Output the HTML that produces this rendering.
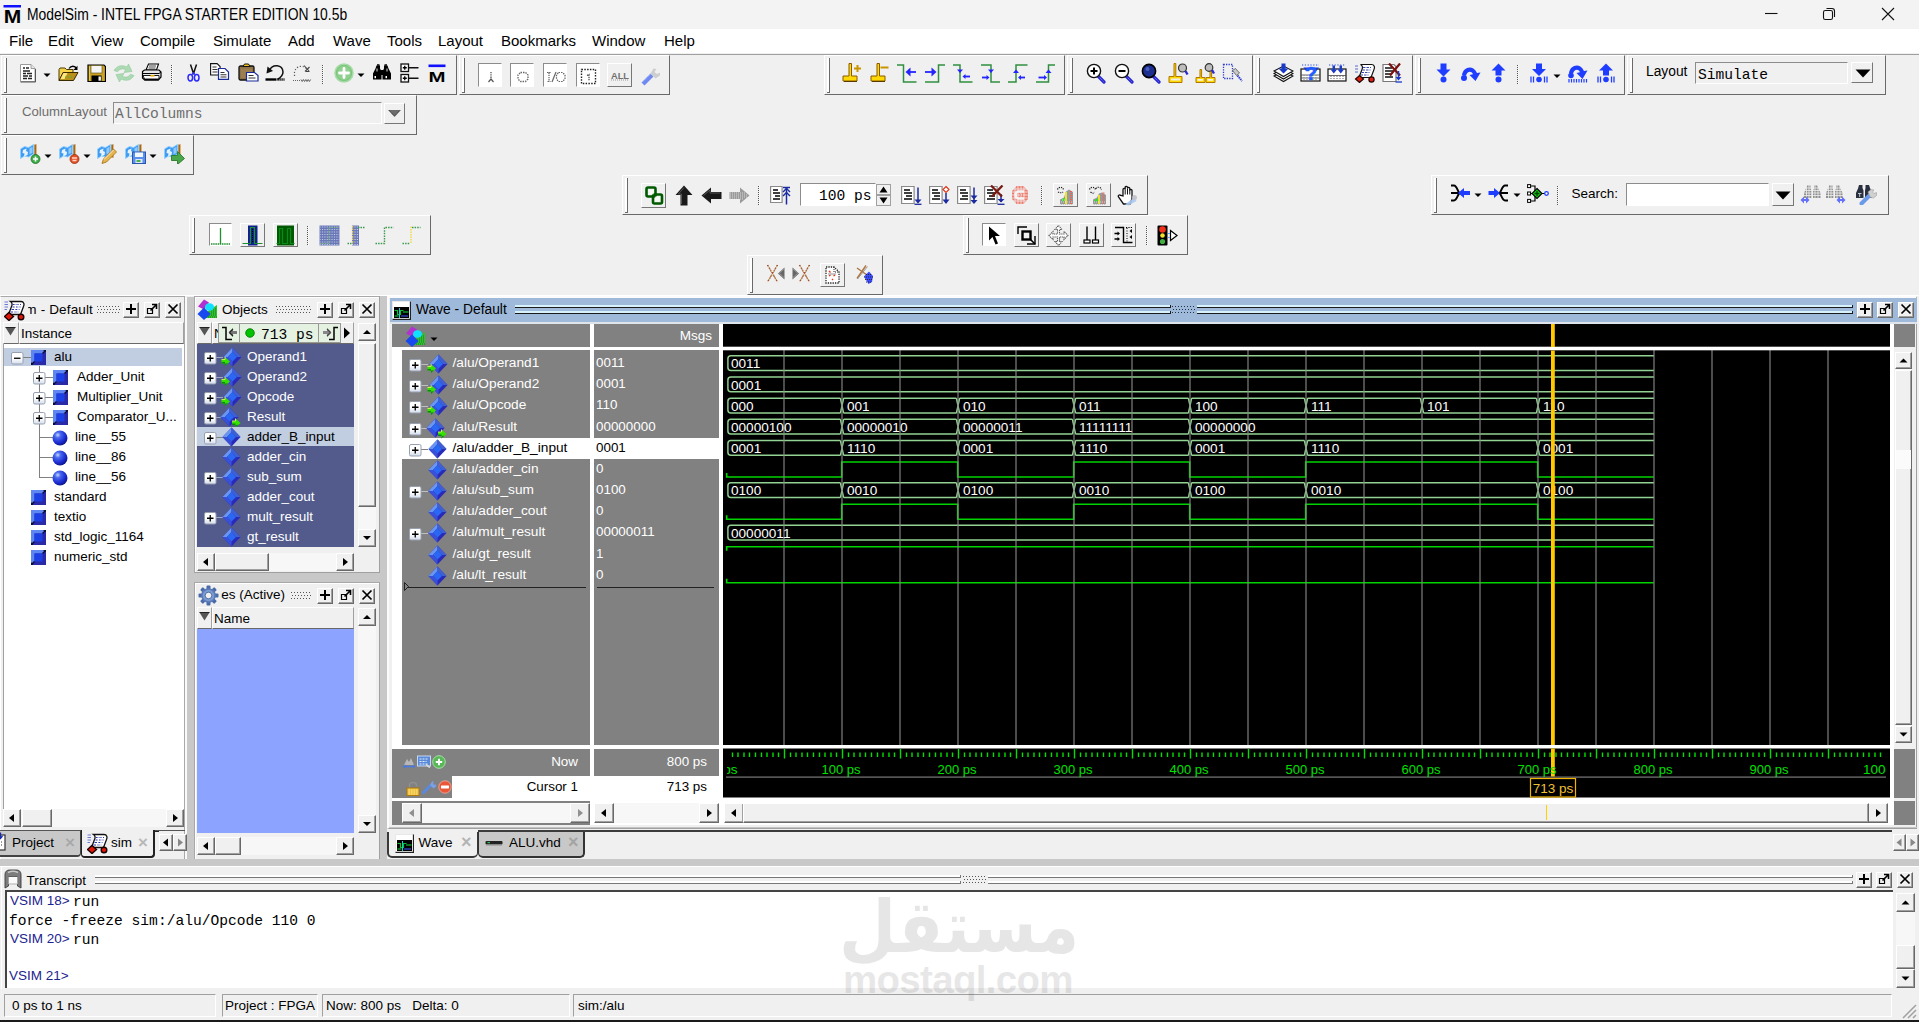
<!DOCTYPE html>
<html><head><meta charset="utf-8"><title>ModelSim - INTEL FPGA STARTER EDITION 10.5b</title>
<style>
html,body{margin:0;padding:0}
body{width:1919px;height:1022px;overflow:hidden;background:#f0f0f0;position:relative;font-family:"Liberation Sans",sans-serif;font-size:13.5px;color:#000}
.a{position:absolute;box-sizing:border-box}
.t{white-space:nowrap;line-height:16px;font-size:13.5px}
.m{white-space:nowrap;font-family:"Liberation Mono",monospace;font-size:14.6px;line-height:17px}
.tb{background:#f0f0f0;border-top:1px solid #fff;border-left:1px solid #fff;border-right:1px solid #696969;border-bottom:1px solid #696969}
.sunk{border-top:1px solid #8c8c8c;border-left:1px solid #8c8c8c;border-right:1px solid #fff;border-bottom:1px solid #fff}
.rbtn{border-top:1px solid #fff;border-left:1px solid #fff;border-right:1px solid #777;border-bottom:1px solid #777;background:#f0f0f0}
.sb{background:#f0f0f0;border-top:1px solid #fff;border-left:1px solid #fff;border-right:1px solid #696969;border-bottom:1px solid #696969;box-shadow:inset -1px -1px 0 #a0a0a0}
.trough{background:#f7f7f7}
.hdr{background:#f0f0f0;border-top:1px solid #fff;border-left:1px solid #fff;border-right:1px solid #a0a0a0;border-bottom:1px solid #696969}

</style></head>
<body>
<div class="a " style="left:0px;top:0px;width:1919px;height:29px;background:#f3f3f3"></div>
<svg class="a" style="left:3px;top:4px" width="19" height="20" viewBox="0 0 19 20"><rect x="0.500" y="1" width="17.500" height="2.500" fill="#1010ff"/><text x="9.500" y="19" font-family="Liberation Sans,sans-serif" font-weight="bold" font-size="17.500" text-anchor="middle" textLength="17.500" lengthAdjust="spacingAndGlyphs" fill="#000">M</text></svg>
<div class="a t" style="left:27px;top:5px;font-size:15.6px;line-height:20px;transform:scaleX(0.891);transform-origin:0 0;">ModelSim - INTEL FPGA STARTER EDITION 10.5b</div>
<svg class="a" style="left:1760px;top:0px" width="150" height="29"><path d="M5 13.5h12.500" stroke="#111" stroke-width="1.100"/><rect x="63.500" y="10.500" width="9" height="9" rx="1.800" fill="none" stroke="#111" stroke-width="1.100"/><path d="M66.500 8.500h5.500a2.500 2.500 0 0 1 2.500 2.500v6" fill="none" stroke="#111" stroke-width="1.100"/><path d="M122 8l12 12M134 8l-12 12" stroke="#111" stroke-width="1.100"/></svg>
<div class="a " style="left:0px;top:29px;width:1919px;height:24px;background:#fff"></div>
<div class="a t" style="left:9px;top:31px;font-size:15px;line-height:20px;">File</div>
<div class="a t" style="left:48px;top:31px;font-size:15px;line-height:20px;">Edit</div>
<div class="a t" style="left:91px;top:31px;font-size:15px;line-height:20px;">View</div>
<div class="a t" style="left:140px;top:31px;font-size:15px;line-height:20px;">Compile</div>
<div class="a t" style="left:213px;top:31px;font-size:15px;line-height:20px;">Simulate</div>
<div class="a t" style="left:288px;top:31px;font-size:15px;line-height:20px;">Add</div>
<div class="a t" style="left:333px;top:31px;font-size:15px;line-height:20px;">Wave</div>
<div class="a t" style="left:387px;top:31px;font-size:15px;line-height:20px;">Tools</div>
<div class="a t" style="left:438px;top:31px;font-size:15px;line-height:20px;">Layout</div>
<div class="a t" style="left:501px;top:31px;font-size:15px;line-height:20px;">Bookmarks</div>
<div class="a t" style="left:592px;top:31px;font-size:15px;line-height:20px;">Window</div>
<div class="a t" style="left:664px;top:31px;font-size:15px;line-height:20px;">Help</div>
<div class="a " style="left:0px;top:53px;width:1919px;height:1px;background:#f0f0f0"></div>
<div class="a " style="left:0px;top:54px;width:1919px;height:1px;background:#a0a0a0"></div>
<div class="a tb" style="left:1px;top:55px;width:456px;height:40px;"></div>
<div class="a" style="left:4px;top:58px;width:3px;height:35px;border-right:1px solid #696969;background:#fff;"></div>
<div class="a" style="left:4px;top:92px;width:3px;height:1px;background:#696969"></div>
<svg class="a" style="left:19px;top:63px" width="18" height="20" viewBox="0 0 18 20"><path d="M1.5 1.5h10.5l4 4v13h-14.5z" fill="#fff" stroke="#9a9a9a"/><path d="M16.5 6v13h-15" fill="none" stroke="#555" stroke-width="1"/><path d="M12 1.5v4h4" fill="#e8e8e8" stroke="#888" stroke-width="0.8"/><path d="M4 5h2M7 5h3M4 8h7M4 10.5h3M8 10.5h5M4 13h5M10 13h3M4 15.5h4M9 15.5h4" stroke="#222" stroke-width="1.4"/></svg>
<svg class="a" style="left:43px;top:73px" width="8" height="5"><path d="M0.5 0.5h7l-3.5 3.5z" fill="#000"/></svg>
<svg class="a" style="left:58px;top:65px" width="21" height="17" viewBox="0 0 21 17"><path d="M1 15.5V4.5l1-1.5h5l1.5 1.5h6.5v3" fill="#f6d24a" stroke="#4a3a00" stroke-width="1"/><path d="M1 15.5l4-8h15l-4.5 8z" fill="#b8901c" stroke="#3a2a00" stroke-width="1"/><path d="M2.5 14l3-6h4l-3 6z" fill="#ffe680"/><path d="M7 12h1M10 12h1M13 12h1" stroke="#1fbf3f" stroke-width="1.2"/><path d="M11 3.5c2-3 6-3 7.5 0" fill="none" stroke="#000" stroke-width="1.3"/><path d="M19.5 0.8v4.2h-4.2z" fill="#000"/></svg>
<svg class="a" style="left:87px;top:64px" width="19" height="18" viewBox="0 0 19 18"><path d="M1 1h16l1.5 1.5v15h-17.5z" fill="#c9a227" stroke="#000" stroke-width="1.2"/><rect x="4" y="1.6" width="11" height="7.4" fill="#f4f4f4" stroke="#5a4a10" stroke-width="0.6"/><rect x="4.5" y="11.5" width="10" height="6" fill="#000"/><rect x="11.5" y="12.5" width="2.4" height="4.2" fill="#f4f4f4"/><path d="M2.5 2v14.5" stroke="#e8c84a" stroke-width="1"/></svg>
<svg class="a" style="left:113px;top:63px" width="22" height="20" viewBox="0 0 22 20"><g fill="#a9d9b0" stroke="#8cc796" stroke-width="0.6" opacity="0.95"><path d="M1 7.5c3-5 8-6 13-3.5l1.5-3 3.5 7.5-8 1 1.7-2.8c-3-1.5-6-1-8.2 2z"/><path d="M21 12.5c-3 5-8 6-13 3.5l-1.5 3-3.5-7.5 8-1-1.7 2.800c3 1.5 6 1 8.200-2z"/></g></svg>
<svg class="a" style="left:141px;top:63px" width="21" height="18" viewBox="0 0 21 18"><path d="M5 7l2.5-6h10l-2 6z" fill="#fff" stroke="#000" stroke-width="1.1"/><path d="M8 3h7M7.500 5h7" stroke="#444" stroke-width="1"/><path d="M1.500 8.500l2-1.500h14.500l2 2v5l-2.500 3h-14l-2-2z" fill="#e6e6e6" stroke="#000" stroke-width="1.2"/><path d="M1.500 10.500h16.500l2-1.500" fill="none" stroke="#000" stroke-width="1"/><path d="M2 12.500h16v3.500h-14.500z" fill="#fff" stroke="#000" stroke-width="0.9"/><rect x="9.500" y="12" width="4" height="1.600" fill="#f0b000"/><path d="M3.500 16.800h14" stroke="#000" stroke-width="1.400"/></svg>
<div class="a" style="left:171px;top:65px;width:0;height:19px;border-left:1px dotted #555;border-right:1px dotted #fff"></div>
<svg class="a" style="left:187px;top:64px" width="13" height="18" viewBox="0 0 13 18"><path d="M3.500 0.500l3 9M9.500 0.500l-3 9" stroke="#111" stroke-width="1.500" fill="none"/><path d="M6.500 8.500v2" stroke="#111" stroke-width="1.5"/><ellipse cx="3.300" cy="13.800" rx="2.300" ry="3.200" fill="none" stroke="#2a2aff" stroke-width="1.500"/><ellipse cx="9.700" cy="13.800" rx="2.300" ry="3.200" fill="none" stroke="#2a2aff" stroke-width="1.500"/><path d="M5 10.500l1.500-1.500 1.500 1.500" stroke="#2a2aff" stroke-width="1.300" fill="none"/></svg>
<svg class="a" style="left:210px;top:63px" width="20" height="17" viewBox="0 0 20 17"><path d="M0.600 0.600h6.500l3 3v8.400h-9.500z" fill="#fff" stroke="#111" stroke-width="1.100"/><path d="M2.500 4h4M2.500 6.500h5M2.500 9h5" stroke="#333" stroke-width="1.100"/><path d="M8.500 5.500h6.500l3.500 3.500v7.400h-10z" fill="#fff" stroke="#1a2a9a" stroke-width="1.200"/><path d="M10.500 9.500h4M10.500 11.800h6M10.500 14h6" stroke="#333" stroke-width="1.100"/></svg>
<svg class="a" style="left:238px;top:63px" width="21" height="19" viewBox="0 0 21 19"><rect x="1" y="3" width="15" height="14" rx="1.500" fill="#8f7248" stroke="#111" stroke-width="1.300"/><path d="M5 3.500l1.500-2.500h4l1.500 2.500z" fill="#f2c21a" stroke="#111" stroke-width="1"/><rect x="3" y="5.500" width="11" height="9.500" fill="#a08458" opacity="0.700"/><path d="M8.500 9.500h8l3.500 3v5.500h-11.500z" fill="#fff" stroke="#1a2a9a" stroke-width="1.200"/><path d="M10.500 12.500h5M10.500 15h7" stroke="#333" stroke-width="1.200"/></svg>
<svg class="a" style="left:265px;top:64px" width="20" height="18" viewBox="0 0 20 18"><path d="M4.500 6c3-6 13-6 13.500 2 0 4-3 6-5.500 7.500" fill="none" stroke="#111" stroke-width="1.500"/><path d="M1.500 9.500l1-7 5.500 4.500z" fill="#111"/><path d="M0.500 15.500h11" stroke="#000" stroke-width="2.400"/><path d="M12.500 15.500h7" stroke="#000" stroke-width="2.400" stroke-dasharray="1.200 0.800"/></svg>
<svg class="a" style="left:292px;top:64px" width="20" height="18" viewBox="0 0 20 18"><path d="M2.500 12v-4c1-5 7-8 12-3.500" fill="none" stroke="#555" stroke-width="1.200" stroke-dasharray="1.200 1.800"/><path d="M12 1.500l5 5.500M17.500 3l-4.500 4.500M14 7.500h3.500" fill="none" stroke="#444" stroke-width="1.100"/><path d="M1 16.500h8" stroke="#666" stroke-width="1" stroke-dasharray="1 1"/><path d="M9 15.500l1.200 2 1.200-2 1.200 2 1.200-2 1.200 2 1.200-2 1.200 2 1.200-2" stroke="#555" stroke-width="0.900" fill="none"/></svg>
<div class="a" style="left:322px;top:65px;width:0;height:19px;border-left:1px dotted #555;border-right:1px dotted #fff"></div>
<svg class="a" style="left:334px;top:63px" width="20" height="20" viewBox="0 0 20 20"><circle cx="10" cy="10" r="9" fill="#7cc47c" stroke="#a7dba7" stroke-width="1.500"/><circle cx="10" cy="10" r="7.200" fill="#8fd08f"/><path d="M10 5.500v9M5.500 10h9" stroke="#fff" stroke-width="2.800" stroke-linecap="round"/></svg>
<svg class="a" style="left:357px;top:73px" width="8" height="5"><path d="M0.5 0.5h7l-3.5 3.5z" fill="#000"/></svg>
<svg class="a" style="left:372px;top:64px" width="20" height="17" viewBox="0 0 20 17"><path d="M4.500 1.500h3.500v3l1.500 3v8h-8.500v-6l2.500-5z" fill="#000"/><path d="M12 1.500h3.500l1 3 2.500 5v6h-8.500v-8l1.500-3z" fill="#000"/><rect x="8.500" y="6" width="3" height="5" fill="#000"/><path d="M5 4.500v3M15 4.500v3" stroke="#fff" stroke-width="0.900"/><rect x="2.500" y="12" width="1.500" height="2.200" fill="#fff"/><rect x="13.500" y="12" width="1.500" height="2.200" fill="#fff"/><path d="M5 1h2.500M12.500 1h2.500" stroke="#000" stroke-width="1.400"/></svg>
<svg class="a" style="left:400px;top:63px" width="19" height="20" viewBox="0 0 19 20"><rect x="1" y="1" width="7.500" height="7.500" fill="#fff" stroke="#111" stroke-width="1.300"/><rect x="1" y="11.500" width="7.500" height="7.500" fill="#fff" stroke="#111" stroke-width="1.300"/><path d="M4.750 2.800v4M2.800 4.750h4M4.750 13.300v4M2.800 15.250h4" stroke="#000" stroke-width="1.300"/><path d="M8.500 4.750h10M8.500 15.250h10" stroke="#111" stroke-width="1.300"/></svg>
<svg class="a" style="left:428px;top:64px" width="18" height="18" viewBox="0 0 18 18"><rect x="0.5" y="0.5" width="17" height="2.6" fill="#1010ff"/><text x="9" y="17.5" font-family="Liberation Sans,sans-serif" font-weight="bold" font-size="15" text-anchor="middle" textLength="17" lengthAdjust="spacingAndGlyphs" fill="#000">M</text></svg>
<div class="a tb" style="left:459px;top:55px;width:211px;height:40px;"></div>
<div class="a" style="left:462px;top:58px;width:3px;height:35px;border-right:1px solid #696969;background:#fff;"></div>
<div class="a" style="left:462px;top:92px;width:3px;height:1px;background:#696969"></div>
<div class="a sunk" style="left:478px;top:63px;width:24px;height:24px;background:#fff;"></div>
<svg class="a" style="left:483px;top:69px" width="16" height="16" viewBox="0 0 16 16"><path d="M8 3v7" stroke="#555" stroke-width="1.3" stroke-dasharray="1.3 1"/><path d="M5.500 13l2.500-3 2.500 3" fill="none" stroke="#555" stroke-width="1.200"/></svg>
<div class="a sunk" style="left:510px;top:63px;width:24px;height:24px;background:#fff;"></div>
<svg class="a" style="left:515px;top:69px" width="16" height="16" viewBox="0 0 16 16"><path d="M5.500 3.500h5l2.500 2.500v4l-2.500 2.500h-5l-2.500-2.500v-4z" fill="none" stroke="#666" stroke-width="1.300" stroke-dasharray="1.500 1"/></svg>
<div class="a sunk" style="left:543px;top:63px;width:24px;height:24px;background:#fff;"></div>
<svg class="a" style="left:546px;top:69px" width="20" height="16" viewBox="0 0 20 16"><path d="M1 3.500h4M3 3.500v9M1.500 12.500h3" stroke="#666" stroke-width="1.200" stroke-dasharray="1.400 0.800" fill="none"/><path d="M10 3l-4 10" stroke="#666" stroke-width="1.200"/><path d="M12.500 3.500h4l2.500 2.500v4l-2.500 2.500h-4l-2-2.500v-4z" fill="none" stroke="#666" stroke-width="1.200" stroke-dasharray="1.500 1"/></svg>
<div class="a sunk" style="left:576px;top:63px;width:24px;height:24px;background:#fff;"></div>
<svg class="a" style="left:580px;top:68px" width="18" height="18" viewBox="0 0 18 18"><rect x="1.500" y="1.500" width="14" height="14" fill="none" stroke="#222" stroke-width="1.400" stroke-dasharray="1.500 1.300"/><path d="M7 7.500l2-1v6.500" fill="none" stroke="#444" stroke-width="1.200" stroke-dasharray="1.400 0.800"/></svg>
<div class="a rbtn" style="left:607px;top:63px;width:25px;height:24px;"></div>
<svg class="a" style="left:610px;top:69px" width="20" height="12" viewBox="0 0 20 12"><text x="10" y="10" font-size="9.500" text-anchor="middle" textLength="18" lengthAdjust="spacingAndGlyphs" font-family="Liberation Sans,sans-serif" font-weight="bold" fill="#707070">ALL</text><path d="M1 11h18" stroke="#999" stroke-width="1" stroke-dasharray="1 1"/></svg>
<svg class="a" style="left:640px;top:65px" width="21" height="21" viewBox="0 0 21 21"><g opacity="0.850"><path d="M1.500 17.500l9-9 3 3-9 9z" fill="#5a78f0"/><path d="M10.500 8.500l3-5 3 0.500-2 3 2.500 2 3-1.500 0 3-4.500 3z" fill="#c9c9c9"/><path d="M3 16.500l8-8" stroke="#bcd0ff" stroke-width="1" stroke-dasharray="1 1"/></g></svg>
<div class="a tb" style="left:824px;top:55px;width:241px;height:40px;"></div>
<div class="a" style="left:827px;top:58px;width:3px;height:35px;border-right:1px solid #696969;background:#fff;"></div>
<div class="a" style="left:827px;top:92px;width:3px;height:1px;background:#696969"></div>
<svg class="a" style="left:842px;top:63px" width="20" height="20" viewBox="0 0 20 20"><path d="M7 0.500h2.500v12.500h5.500v5h-14v-5h6z" fill="#ffd900" stroke="#8a5a00" stroke-width="1"/><path d="M2 18.500h13" stroke="#5a3a00" stroke-width="1"/><path d="M15.500 2v7M12 5.500h7" stroke="#c89600" stroke-width="2"/></svg>
<svg class="a" style="left:870px;top:63px" width="20" height="20" viewBox="0 0 20 20"><path d="M7 0.500h2.500v12.500h5.500v5h-14v-5h6z" fill="#ffd900" stroke="#8a5a00" stroke-width="1"/><path d="M2 18.500h13" stroke="#5a3a00" stroke-width="1"/><path d="M10.500 4.500h8" stroke="#c89600" stroke-width="2"/></svg>
<svg class="a" style="left:896px;top:64px" width="22" height="19" viewBox="0 0 22 19"><path d="M1 1h6.500v17h13" fill="none" stroke="#2f8f3f" stroke-width="1.500"/><path d="M14.0 8H20" stroke="#2424ff" stroke-width="1.800"/><path d="M9.5 8l5.0 -4.5v9.0z" fill="#2424ff"/></svg>
<svg class="a" style="left:924px;top:64px" width="22" height="19" viewBox="0 0 22 19"><path d="M1 18h13.500v-17h6.500" fill="none" stroke="#2f8f3f" stroke-width="1.500"/><path d="M1 8H8.0" stroke="#2424ff" stroke-width="1.800"/><path d="M12.5 8l-5.0 -4.5v9.0z" fill="#2424ff"/></svg>
<svg class="a" style="left:952px;top:64px" width="21" height="19" viewBox="0 0 21 19"><path d="M1 1h7v17h12.500" fill="none" stroke="#2f8f3f" stroke-width="1.500"/><path d="M5.0 5.5h6.0l-3.0 3.5z" fill="#2424ff"/><path d="M13.0 12.5H18" stroke="#2424ff" stroke-width="1.800"/><path d="M10.5 12.5l3.0 -2.5v5.0z" fill="#2424ff"/></svg>
<svg class="a" style="left:980px;top:64px" width="21" height="19" viewBox="0 0 21 19"><path d="M1 1h10v17h9" fill="none" stroke="#2f8f3f" stroke-width="1.500"/><path d="M8.0 5.5h6.0l-3.0 3.5z" fill="#2424ff"/><path d="M2 13.5H7.0" stroke="#2424ff" stroke-width="1.800"/><path d="M9.5 13.5l-3.0 -2.5v5.0z" fill="#2424ff"/></svg>
<svg class="a" style="left:1007px;top:64px" width="21" height="19" viewBox="0 0 21 19"><path d="M1 18h8v-17h11.500" fill="none" stroke="#2f8f3f" stroke-width="1.500"/><path d="M6.0 9.0h6.0l-3.0 -3.5z" fill="#2424ff"/><path d="M13.5 13.5H18" stroke="#2424ff" stroke-width="1.800"/><path d="M11 13.5l3.0 -2.5v5.0z" fill="#2424ff"/></svg>
<svg class="a" style="left:1035px;top:64px" width="21" height="19" viewBox="0 0 21 19"><path d="M1 18h12.500v-17h6.500" fill="none" stroke="#2f8f3f" stroke-width="1.500"/><path d="M10.5 9.0h6.0l-3.0 -3.5z" fill="#2424ff"/><path d="M3.5 13.5H9.5" stroke="#2424ff" stroke-width="1.800"/><path d="M12 13.5l-3.0 -2.5v5.0z" fill="#2424ff"/></svg>
<div class="a tb" style="left:1067px;top:55px;width:186px;height:40px;"></div>
<div class="a" style="left:1070px;top:58px;width:3px;height:35px;border-right:1px solid #696969;background:#fff;"></div>
<div class="a" style="left:1070px;top:92px;width:3px;height:1px;background:#696969"></div>
<svg class="a" style="left:1086px;top:63px" width="20" height="21" viewBox="0 0 20 21"><path d="M12.5 13.5l5.500 5.500" stroke="#2a2ad0" stroke-width="3.200" stroke-linecap="round"/><path d="M12.5 13.5l5.500 5.500" stroke="#8a8aff" stroke-width="1" stroke-dasharray="1 1"/><circle cx="8" cy="8" r="6.600" fill="#fff" stroke="#111" stroke-width="1.400"/><path d="M8 4.500v7M4.500 8h7" stroke="#000" stroke-width="2"/></svg>
<svg class="a" style="left:1114px;top:63px" width="20" height="21" viewBox="0 0 20 21"><path d="M12.5 13.5l5.500 5.500" stroke="#2a2ad0" stroke-width="3.200" stroke-linecap="round"/><path d="M12.5 13.5l5.500 5.500" stroke="#8a8aff" stroke-width="1" stroke-dasharray="1 1"/><circle cx="8" cy="8" r="6.600" fill="#fff" stroke="#111" stroke-width="1.400"/><path d="M4.500 8h7" stroke="#000" stroke-width="2"/></svg>
<svg class="a" style="left:1141px;top:63px" width="20" height="21" viewBox="0 0 20 21"><path d="M12.5 13.5l5.500 5.500" stroke="#2a2ad0" stroke-width="3.200" stroke-linecap="round"/><path d="M12.5 13.5l5.500 5.500" stroke="#8a8aff" stroke-width="1" stroke-dasharray="1 1"/><circle cx="8" cy="8" r="6.600" fill="#1c2f8e" stroke="#000" stroke-width="1.600"/><circle cx="6.500" cy="6" r="2" fill="#4a5fc0"/></svg>
<svg class="a" style="left:1168px;top:63px" width="22" height="21" viewBox="0 0 22 21"><path d="M6 0.500h1.800v13h6.200v6h-13v-6h5z" fill="#ffd900" stroke="#b07800" stroke-width="1"/><rect x="3" y="15.500" width="9" height="2" fill="#f0f0f0"/><circle cx="14.500" cy="5" r="4" fill="#bdbdbd" stroke="#333" stroke-width="1.200"/><path d="M17.500 8l2 3.500" stroke="#2a2ad0" stroke-width="2.400"/></svg>
<svg class="a" style="left:1195px;top:63px" width="22" height="21" viewBox="0 0 22 21"><path d="M5 6.500h1.600v8h3.400v5h-9v-5h4z" fill="#ffd900" stroke="#b07800" stroke-width="1"/><path d="M15 6.500h1.600v8h3.400v5h-9v-5h4z" fill="#ffd900" stroke="#b07800" stroke-width="1"/><rect x="2.500" y="16" width="5.500" height="1.800" fill="#f0f0f0"/><rect x="12.500" y="16" width="5.500" height="1.800" fill="#f0f0f0"/><circle cx="14" cy="4.500" r="3.800" fill="#bdbdbd" stroke="#333" stroke-width="1.200"/><path d="M17 7l2 3.500" stroke="#2a2ad0" stroke-width="2.400"/></svg>
<svg class="a" style="left:1222px;top:63px" width="22" height="21" viewBox="0 0 22 21"><rect x="1.500" y="1.500" width="9" height="14" fill="none" stroke="#2a3ad0" stroke-width="1.300" stroke-dasharray="1.300 1.200"/><path d="M10.500 7.500l3-2 4 4.500-3 2.500z" fill="#c8c8c8" stroke="#555" stroke-width="0.800"/><path d="M15.500 12.500l4.500 5.500" stroke="#2a3ad0" stroke-width="2" stroke-dasharray="1.400 0.800"/></svg>
<div class="a tb" style="left:1254px;top:55px;width:159px;height:40px;"></div>
<div class="a" style="left:1257px;top:58px;width:3px;height:35px;border-right:1px solid #696969;background:#fff;"></div>
<div class="a" style="left:1257px;top:92px;width:3px;height:1px;background:#696969"></div>
<svg class="a" style="left:1273px;top:63px" width="21" height="20" viewBox="0 0 21 20"><path d="M1 13l9.500-5 9.500 5-9.500 5.500z" fill="#fff" stroke="#111" stroke-width="1.100"/><path d="M1 10.500l9.500-5 9.500 5-9.500 5.500z" fill="#fff" stroke="#111" stroke-width="1.100"/><path d="M1 8l9.500-5 9.500 5-9.500 5.500z" fill="#fff" stroke="#111" stroke-width="1.100"/><path d="M8.500 0.500h4v5h3l-5 5-5-5h3z" fill="#1a3ac8"/></svg>
<svg class="a" style="left:1300px;top:64px" width="21" height="19" viewBox="0 0 21 19"><rect x="1" y="5" width="19" height="12" fill="#fff" stroke="#111" stroke-width="1.200"/><path d="M1 11h19M1 14h19" stroke="#444" stroke-width="0.800"/><path d="M4 11v6M7 11v6M10 11v6M13 11v6M16 11v6" stroke="#888" stroke-width="1" stroke-dasharray="1 1"/><path d="M2 1h17" stroke="#2a4ae0" stroke-width="1.200" stroke-dasharray="1.200 1.600"/><path d="M3.500 3.500h5l-2.500 3.500zM14 3.500h5l-2.500 3.500z" fill="#1a3ac8"/><text x="11" y="16" font-family="Liberation Sans,sans-serif" font-weight="bold" font-size="19" text-anchor="middle" fill="#1f5bff" stroke="#1f5bff" stroke-width="0.700">?</text></svg>
<svg class="a" style="left:1327px;top:64px" width="20" height="18" viewBox="0 0 20 18"><rect x="1" y="5" width="18" height="12" fill="#fff" stroke="#111" stroke-width="1.200"/><path d="M1 11.500h18" stroke="#444" stroke-width="0.800"/><path d="M4 12v5M7 12v5M10 12v5M13 12v5M16 12v5" stroke="#666" stroke-width="1" stroke-dasharray="1 1"/><path d="M2 1h16" stroke="#2a4ae0" stroke-width="1.200" stroke-dasharray="1.200 1.600"/><path d="M5.500 1.500h2.500v4h2l-3.200 4-3.200-4h2zM12.500 1.500h2.500v4h2l-3.200 4-3.200-4h2z" fill="#1a3ac8"/></svg>
<svg class="a" style="left:1354px;top:63px" width="22" height="20" viewBox="0 0 22 20"><path d="M6.500 1.500h11c3 0 3.500 3 2.500 5l-3 8h-12l3-8c1-2 0.500-4-1.500-5z" fill="#fff" stroke="#111" stroke-width="1.200"/><path d="M9 4.500h8M8.500 7h8M7.500 9.500h8M6.500 12h8" stroke="#3a4ab0" stroke-width="1.100" stroke-dasharray="2.500 1"/><path d="M1 3h3M1 6h3M1 9h3" stroke="#5a6ad0" stroke-width="1" /><path d="M5.500 12.500l4 3.500-4 3.500-4-3.500z" fill="#e02010" stroke="#200" stroke-width="1.200"/><circle cx="17.500" cy="16.500" r="2.600" fill="#e02010" stroke="#200" stroke-width="1.200"/></svg>
<svg class="a" style="left:1382px;top:63px" width="21" height="20" viewBox="0 0 21 20"><path d="M1 1.500h11l2 2v15h-13z" fill="#fff" stroke="#777" stroke-width="1.200"/><path d="M3 5h7M3 8h8M3 11h6M3 14h8" stroke="#111" stroke-width="1.400"/><path d="M7 0.500l11 12M18 0.500l-10 12" stroke="#7a1212" stroke-width="2.200"/><path d="M16.500 8v8" stroke="#1a3ac8" stroke-width="1.500"/><path d="M13.500 14h6l-3 3.500z" fill="#1a3ac8"/><path d="M13.500 19h6.500" stroke="#1a3ac8" stroke-width="1.300"/></svg>
<div class="a tb" style="left:1415px;top:55px;width:210px;height:40px;"></div>
<div class="a" style="left:1418px;top:58px;width:3px;height:35px;border-right:1px solid #696969;background:#fff;"></div>
<div class="a" style="left:1418px;top:92px;width:3px;height:1px;background:#696969"></div>
<svg class="a" style="left:1436px;top:63px" width="15" height="20" viewBox="0 0 15 20"><path d="M4.500 0.500h6v6h4l-7 7-7-7h4z" fill="#1f3dff"/><circle cx="7.500" cy="16.500" r="3" fill="#1f3dff"/></svg>
<svg class="a" style="left:1460px;top:65px" width="21" height="17" viewBox="0 0 21 17"><path d="M2 10c1-8 11-11 15-2l3.500-0.500-5 8.500-6-6 3.500-0.800c-2-4-6-2.500-7 1.500z" fill="#1f3dff"/><circle cx="4" cy="13" r="3" fill="#1f3dff"/></svg>
<svg class="a" style="left:1491px;top:63px" width="15" height="20" viewBox="0 0 15 20"><path d="M7.500 0.500l7 7h-4v5h-6v-5h-4z" fill="#1f3dff"/><circle cx="7.500" cy="16.500" r="3" fill="#1f3dff"/></svg>
<div class="a" style="left:1517px;top:65px;width:0;height:19px;border-left:1px dotted #555;border-right:1px dotted #fff"></div>
<svg class="a" style="left:1530px;top:63px" width="18" height="20" viewBox="0 0 18 20"><path d="M6 0.500h6v5.500h4l-7 7-7-7h4z" fill="#1f3dff"/><circle cx="9" cy="16.500" r="2.800" fill="#1f3dff"/><path d="M1 13.500v6M3.500 13.500v6M14.500 13.500v6M17 13.500v6" stroke="#1f3dff" stroke-width="1.300"/></svg>
<svg class="a" style="left:1553px;top:74px" width="8" height="5"><path d="M0.5 0.5h7l-3.5 3.5z" fill="#000"/></svg>
<svg class="a" style="left:1567px;top:63px" width="21" height="20" viewBox="0 0 21 20"><path d="M2 10c1-8 11-11 15-2l3.500-0.500-5 8.500-6-6 3.500-0.800c-2-4-6-2.500-7 1.500z" fill="#1f3dff"/><circle cx="4" cy="12.500" r="2.800" fill="#1f3dff"/><path d="M2 16v3.500M4.500 16v3.500M7 16v3.500M9.500 16v3.500M12 16v3.500M14.500 16v3.500M17 16v3.500M19.500 16v3.500" stroke="#1f3dff" stroke-width="1.200"/></svg>
<svg class="a" style="left:1597px;top:63px" width="18" height="20" viewBox="0 0 18 20"><path d="M9 0.500l7 7h-4v5h-6v-5h-4z" fill="#1f3dff"/><circle cx="9" cy="16.500" r="2.800" fill="#1f3dff"/><path d="M1 13.500v6M3.500 13.500v6M14.500 13.500v6M17 13.500v6" stroke="#1f3dff" stroke-width="1.300"/></svg>
<div class="a tb" style="left:1627px;top:55px;width:259px;height:40px;"></div>
<div class="a" style="left:1630px;top:58px;width:3px;height:35px;border-right:1px solid #696969;background:#fff;"></div>
<div class="a" style="left:1630px;top:92px;width:3px;height:1px;background:#696969"></div>
<div class="a t" style="left:1646px;top:63.5px;font-size:13.8px">Layout</div>
<div class="a sunk" style="left:1695px;top:62px;width:153px;height:22px;background:#f0f0f0"></div>
<div class="a m" style="left:1698px;top:66.5px;">Simulate</div>
<div class="a rbtn" style="left:1851px;top:62px;width:22px;height:21px;"></div>
<svg class="a" style="left:1855px;top:69px" width="16" height="9"><path d="M0.5 0.5h15l-7.5 8z" fill="#000"/></svg>
<div class="a tb" style="left:1px;top:95px;width:416px;height:40px;"></div>
<div class="a" style="left:4px;top:98px;width:3px;height:35px;border-right:1px solid #696969;background:#fff;"></div>
<div class="a" style="left:4px;top:132px;width:3px;height:1px;background:#696969"></div>
<div class="a t" style="left:22px;top:104px;color:#6d6d6d;font-size:13.2px">ColumnLayout</div>
<div class="a sunk" style="left:113px;top:102px;width:269px;height:22px;background:#f0f0f0"></div>
<div class="a m" style="left:115px;top:105.5px;color:#6d6d6d">AllColumns</div>
<div class="a rbtn" style="left:384px;top:103px;width:21px;height:21px;"></div>
<svg class="a" style="left:387px;top:109px" width="15" height="9"><path d="M1 1h13l-6.5 7z" fill="#6d6d6d"/><path d="M2 1l5.5 6 5.5-6" fill="none" stroke="#333" stroke-width="0.8" stroke-dasharray="1 1"/></svg>
<div class="a tb" style="left:1px;top:135px;width:193px;height:40px;"></div>
<div class="a" style="left:4px;top:138px;width:3px;height:35px;border-right:1px solid #696969;background:#fff;"></div>
<div class="a" style="left:4px;top:172px;width:3px;height:1px;background:#696969"></div>
<svg class="a" style="left:20px;top:144px" width="21" height="20" viewBox="0 0 21 20"><path d="M0.500 5l4-2.500 4 1 5-3 0 9.500-5 3-4-1-4 2.500z" fill="#3f9cf2" stroke="#8fd0ff" stroke-width="0.900"/><path d="M3 6l3.500-1.500-0.500 2.500 2 1-0.500 3-3.500 1.500 0.500-3-2-0.500z" fill="#e6f3ff"/><path d="M9.500 4.500l3-1.800 0 6-3 1.800z" fill="#9fd2ff" opacity="0.850"/><path d="M15.500 0.500v13" stroke="#a06820" stroke-width="2.400"/><path d="M16.500 0.500v13" stroke="#e6b878" stroke-width="0.900"/><circle cx="15.500" cy="15" r="4.500" fill="#3fae4a" stroke="#1f6e2a" stroke-width="0.800"/><path d="M15.500 12.500v5M13 15h5" stroke="#fff" stroke-width="1.600"/></svg>
<svg class="a" style="left:44px;top:154px" width="8" height="5"><path d="M0.5 0.5h7l-3.5 3.5z" fill="#000"/></svg>
<svg class="a" style="left:59px;top:144px" width="21" height="20" viewBox="0 0 21 20"><path d="M0.500 5l4-2.500 4 1 5-3 0 9.500-5 3-4-1-4 2.500z" fill="#3f9cf2" stroke="#8fd0ff" stroke-width="0.900"/><path d="M3 6l3.500-1.500-0.500 2.500 2 1-0.500 3-3.500 1.500 0.500-3-2-0.500z" fill="#e6f3ff"/><path d="M9.500 4.500l3-1.800 0 6-3 1.800z" fill="#9fd2ff" opacity="0.850"/><path d="M15.500 0.500v13" stroke="#a06820" stroke-width="2.400"/><path d="M16.500 0.500v13" stroke="#e6b878" stroke-width="0.900"/><circle cx="15.500" cy="15" r="4.500" fill="#e8502a" stroke="#903010" stroke-width="0.800"/><path d="M13 14h5M13.500 16.500h4" stroke="#ffd8c0" stroke-width="1.300"/></svg>
<svg class="a" style="left:83px;top:154px" width="8" height="5"><path d="M0.5 0.5h7l-3.5 3.5z" fill="#000"/></svg>
<svg class="a" style="left:97px;top:144px" width="21" height="20" viewBox="0 0 21 20"><path d="M0.500 5l4-2.500 4 1 5-3 0 9.500-5 3-4-1-4 2.500z" fill="#3f9cf2" stroke="#8fd0ff" stroke-width="0.900"/><path d="M3 6l3.500-1.500-0.500 2.500 2 1-0.500 3-3.500 1.500 0.500-3-2-0.500z" fill="#e6f3ff"/><path d="M9.500 4.500l3-1.800 0 6-3 1.800z" fill="#9fd2ff" opacity="0.850"/><path d="M15.500 0.500v13" stroke="#a06820" stroke-width="2.400"/><path d="M16.500 0.500v13" stroke="#e6b878" stroke-width="0.900"/><path d="M5 19.500l1.500-4.500 10-10 3 3-10 10z" fill="#e8b450" stroke="#a87820" stroke-width="0.900"/><path d="M7 15.500l9.500-9.500" stroke="#fff0c0" stroke-width="1"/></svg>
<svg class="a" style="left:125px;top:144px" width="21" height="20" viewBox="0 0 21 20"><path d="M0.500 5l4-2.500 4 1 5-3 0 9.500-5 3-4-1-4 2.500z" fill="#3f9cf2" stroke="#8fd0ff" stroke-width="0.900"/><path d="M3 6l3.500-1.500-0.500 2.500 2 1-0.500 3-3.500 1.500 0.500-3-2-0.500z" fill="#e6f3ff"/><path d="M9.500 4.500l3-1.800 0 6-3 1.800z" fill="#9fd2ff" opacity="0.850"/><path d="M15.500 0.500v13" stroke="#a06820" stroke-width="2.400"/><path d="M16.500 0.500v13" stroke="#e6b878" stroke-width="0.900"/><rect x="7.500" y="8" width="13" height="11.500" fill="#5b8fe8" stroke="#2a55b0" stroke-width="1"/><rect x="10" y="8.500" width="8" height="4.500" fill="#f2f6ff"/><rect x="10.500" y="15" width="7" height="4" fill="#dfe8f8"/><rect x="11.500" y="16" width="4" height="2" fill="#4caf50"/></svg>
<svg class="a" style="left:149px;top:154px" width="8" height="5"><path d="M0.5 0.5h7l-3.5 3.5z" fill="#000"/></svg>
<svg class="a" style="left:164px;top:144px" width="21" height="20" viewBox="0 0 21 20"><path d="M0.500 5l4-2.500 4 1 5-3 0 9.500-5 3-4-1-4 2.500z" fill="#3f9cf2" stroke="#8fd0ff" stroke-width="0.900"/><path d="M3 6l3.500-1.500-0.500 2.500 2 1-0.500 3-3.500 1.500 0.500-3-2-0.500z" fill="#e6f3ff"/><path d="M9.500 4.500l3-1.800 0 6-3 1.800z" fill="#9fd2ff" opacity="0.850"/><path d="M15.500 0.500v13" stroke="#a06820" stroke-width="2.400"/><path d="M16.500 0.500v13" stroke="#e6b878" stroke-width="0.900"/><path d="M7.500 11.500h6v-4l7 7-7 6v-4h-6z" fill="#4aa64a" stroke="#2a7a2a" stroke-width="0.900"/></svg>
<div class="a tb" style="left:622px;top:175px;width:526px;height:40px;"></div>
<div class="a" style="left:625px;top:178px;width:3px;height:35px;border-right:1px solid #696969;background:#fff;"></div>
<div class="a" style="left:625px;top:212px;width:3px;height:1px;background:#696969"></div>
<div class="a rbtn" style="left:641px;top:183px;width:25px;height:25px;"></div>
<svg class="a" style="left:645px;top:186px" width="19" height="19" viewBox="0 0 19 19"><rect x="1.500" y="1.500" width="9" height="9" rx="1.500" fill="none" stroke="#005a00" stroke-width="2.600"/><rect x="8" y="8.500" width="9" height="9" rx="1.500" fill="none" stroke="#005a00" stroke-width="2.600"/><rect x="3.500" y="3.500" width="5" height="5" fill="#f8fff8" opacity="0.600"/><rect x="10" y="10.500" width="5" height="5" fill="#f8fff8" opacity="0.600"/></svg>
<svg class="a" style="left:675px;top:185px" width="18" height="21" viewBox="0 0 18 21"><path d="M9 0.500l8.500 9.500h-5v10.500h-7v-10.500h-5z" fill="#1a1a1a"/><path d="M9 2.500l-5.500 6.500h3v10" stroke="#555" stroke-width="1" fill="none"/></svg>
<svg class="a" style="left:701px;top:187px" width="21" height="17" viewBox="0 0 21 17"><path d="M0.500 8.500l9.500-8v4.500h10.500v7h-10.500v4.500z" fill="#1a1a1a"/><path d="M2.500 8.500l6.500-5.500v3h10" stroke="#555" stroke-width="1" fill="none"/></svg>
<svg class="a" style="left:729px;top:187px" width="21" height="17" viewBox="0 0 21 17"><path d="M20.500 8.500l-9.500-8v4.500h-10.500v7h10.500v4.500z" fill="#9a9a9a"/><path d="M1 6h16M1 8h18M1 10h17M1 12h14" stroke="#f0f0f0" stroke-width="0.700" stroke-dasharray="1 1"/></svg>
<div class="a" style="left:758px;top:186px;width:0;height:19px;border-left:1px dotted #555;border-right:1px dotted #fff"></div>
<svg class="a" style="left:770px;top:185px" width="21" height="20" viewBox="0 0 21 20"><path d="M0.600 1.500h11.500v16h-11.500z" fill="#fff" stroke="#8a8a8a" stroke-width="1.200"/><path d="M3 5h5M3 8h7M5 11h5M3 14h7" stroke="#000" stroke-width="1.500"/><path d="M16.500 2v17.500" stroke="#1a2aa0" stroke-width="1.500"/><path d="M13 2.500h7M13 7l3.500-3.500 3.500 3.500M13 11l3.500-3.500 3.500 3.500" stroke="#1a2aa0" stroke-width="1.400" fill="none"/></svg>
<div class="a sunk" style="left:800px;top:183px;width:76px;height:23px;background:#fff"></div>
<div class="a m" style="left:819px;top:187.5px;">100 ps</div>
<svg class="a" style="left:876px;top:184px" width="15" height="22"><rect x="0.5" y="0.5" width="14" height="10" fill="#f0f0f0" stroke="#a0a0a0"/><rect x="0.5" y="11.5" width="14" height="10" fill="#f0f0f0" stroke="#a0a0a0"/><path d="M3.5 8.5h8l-4-6z M3.5 13.5h8l-4 6z" fill="#000"/></svg>
<svg class="a" style="left:901px;top:185px" width="21" height="20" viewBox="0 0 21 20"><path d="M0.600 1.500h12.500v17h-12.500z" fill="#fff" stroke="#8a8a8a" stroke-width="1.200"/><path d="M3 5h6M3 8h8M5 11h6M3 14h8" stroke="#000" stroke-width="1.500"/><path d="M17 2.500v15" stroke="#1a2aa0" stroke-width="1.500"/><path d="M13.500 14.500h7l-3.500 4z" fill="#1a2aa0"/><path d="M13.500 19.300h7" stroke="#1a2aa0" stroke-width="1.300"/></svg>
<svg class="a" style="left:929px;top:185px" width="21" height="20" viewBox="0 0 21 20"><path d="M0.600 1.500h12.500v17h-12.500z" fill="#fff" stroke="#8a8a8a" stroke-width="1.200"/><path d="M3 5h6M3 8h8M5 11h6M3 14h8" stroke="#000" stroke-width="1.500"/><path d="M17 8v9" stroke="#1a2aa0" stroke-width="1.500"/><path d="M13.500 14.500h7l-3.500 4.500z" fill="#1a2aa0"/><path d="M17 1.500l3 3-3 3-3-3z" fill="#fff" stroke="#e03010" stroke-width="1.100"/></svg>
<svg class="a" style="left:957px;top:185px" width="21" height="20" viewBox="0 0 21 20"><path d="M0.600 1.500h12.500v17h-12.500z" fill="#fff" stroke="#8a8a8a" stroke-width="1.200"/><path d="M3 5h6M3 8h8M5 11h6M3 14h8" stroke="#000" stroke-width="1.500"/><path d="M17 2.500v14" stroke="#1a2aa0" stroke-width="1.500"/><path d="M13.500 10.500h7l-3.500 4zM13.500 15h7l-3.500 4z" fill="#1a2aa0"/></svg>
<svg class="a" style="left:984px;top:185px" width="21" height="20" viewBox="0 0 21 20"><path d="M0.600 1.500h12.500v17h-12.500z" fill="#fff" stroke="#8a8a8a" stroke-width="1.200"/><path d="M3 5h6M3 8h8M5 11h6M3 14h8" stroke="#000" stroke-width="1.500"/><path d="M17 9v8" stroke="#1a2aa0" stroke-width="1.500"/><path d="M13.500 14h7l-3.500 3.500z" fill="#1a2aa0"/><path d="M13.500 19.300h7" stroke="#1a2aa0" stroke-width="1.300"/><path d="M7 0.500l11 11M18.500 0.500l-10.500 11" stroke="#7a1a12" stroke-width="2.300"/></svg>
<svg class="a" style="left:1011px;top:185px" width="18" height="20" viewBox="0 0 18 20"><path d="M5.500 1h7l4.500 5v8l-4.500 5h-7l-4.500-5v-8z" fill="#ee7060" opacity="0.900"/><path d="M1 4h16M1 7h16M1 10h16M1 13h16M1 16h16M4 1v18M7 1v18M10 1v18M13 1v18" stroke="#f0f0f0" stroke-width="0.800"/><path d="M13 6.500h-5.500c-2 0-3 1.500-3 3.500s1 3.500 3 3.500h5.500" fill="none" stroke="#f4f4f4" stroke-width="2.600"/><path d="M9 10h4" stroke="#ee7060" stroke-width="1.200" stroke-dasharray="1 1"/></svg>
<div class="a" style="left:1041px;top:186px;width:0;height:19px;border-left:1px dotted #555;border-right:1px dotted #fff"></div>
<div class="a rbtn" style="left:1053px;top:183px;width:25px;height:24px;"></div>
<svg class="a" style="left:1056px;top:186px" width="19" height="19" viewBox="0 0 19 19"><path d="M1.500 3.500c1-3 5-3 6 0M2 6c2 1 4 1 5 0" fill="none" stroke="#222" stroke-width="1.200" stroke-dasharray="1.200 1"/><path d="M4 18.500v-5l4-2 2-6 3-2 4 2.500v12.500z" fill="#9a9a9a"/><path d="M10 6v12" stroke="#f0e030" stroke-width="2"/><path d="M15 5v13" stroke="#f06050" stroke-width="2" stroke-dasharray="1 1"/><path d="M6 14.500l3-1.500" stroke="#30e030" stroke-width="2"/><path d="M4 18.500h13M5 16h12M6 14h3" stroke="#f0f0f0" stroke-width="0.700" stroke-dasharray="1 1"/></svg>
<div class="a rbtn" style="left:1086px;top:183px;width:25px;height:24px;"></div>
<svg class="a" style="left:1088px;top:186px" width="20" height="19" viewBox="0 0 20 19"><path d="M1.500 3.500c1-3 5-3 6 0 1-3 5-3 6 0M2.500 6c2 1.500 3 1.500 4 0" fill="none" stroke="#222" stroke-width="1.200" stroke-dasharray="1.200 1"/><path d="M5 18.500v-5l4-2 2-4 3-1 4 2.500v9.500z" fill="#9a9a9a"/><path d="M11 9v9" stroke="#f0e030" stroke-width="2"/><path d="M15.500 6.500v12" stroke="#f06050" stroke-width="2" stroke-dasharray="1 1"/><path d="M7 15l3-1.500" stroke="#30e030" stroke-width="2"/><path d="M5 18.500h13M6 16h12" stroke="#f0f0f0" stroke-width="0.700" stroke-dasharray="1 1"/></svg>
<svg class="a" style="left:1117px;top:185px" width="20" height="21" viewBox="0 0 20 21"><path d="M6 11v-6.500c0-1.600 2.200-1.600 2.200 0v-2c0-1.600 2.300-1.600 2.300 0v1c0-1.600 2.300-1.600 2.300 0v2c0-1.400 2.200-1.400 2.200 0v8l-2 5.500h-6.500l-5-7c-1-1.500 1-2.800 2.200-1.500z" fill="#fff" stroke="#111" stroke-width="1.300"/><path d="M8.200 4.500v5M10.500 3.500v6M12.800 4.500v5" stroke="#111" stroke-width="1"/><path d="M8 19.500l9-7 2.500 3.500-8 4.500z" fill="#a8c8f0" opacity="0.900"/><circle cx="17.500" cy="12.500" r="2.500" fill="#c0c0c8" opacity="0.900"/></svg>
<div class="a tb" style="left:1431px;top:175px;width:458px;height:40px;"></div>
<div class="a" style="left:1434px;top:178px;width:3px;height:35px;border-right:1px solid #696969;background:#fff;"></div>
<div class="a" style="left:1434px;top:212px;width:3px;height:1px;background:#696969"></div>
<svg class="a" style="left:1450px;top:184px" width="21" height="18" viewBox="0 0 21 18"><path d="M1 1.500h3c3 0 4 7.500 6 7.500M1 9h9M1 16.500h3c3 0 4-7.500 6-7.500" fill="none" stroke="#000" stroke-width="2"/><path d="M8 9l6-5v3h6v4h-6v3z" fill="#1f3dff"/></svg>
<svg class="a" style="left:1474px;top:193px" width="8" height="5"><path d="M0.5 0.5h7l-3.5 3.5z" fill="#000"/></svg>
<svg class="a" style="left:1488px;top:184px" width="21" height="18" viewBox="0 0 21 18"><path d="M20 1.500h-3c-3 0-4 7.500-6 7.500M20 9h-9M20 16.500h-3c-3 0-4-7.500-6-7.500" fill="none" stroke="#000" stroke-width="2"/><path d="M12 9l-6-5v3h-5.500v4h5.500v3z" fill="#1f3dff"/></svg>
<svg class="a" style="left:1513px;top:193px" width="8" height="5"><path d="M0.5 0.5h7l-3.5 3.5z" fill="#000"/></svg>
<svg class="a" style="left:1527px;top:184px" width="22" height="19" viewBox="0 0 22 19"><path d="M3 2h5v7.500M3 9.500h6M3 17h5v-7.500M13 9.500h5" fill="none" stroke="#000" stroke-width="1.200"/><rect x="0.600" y="0.600" width="3" height="3" fill="#fff" stroke="#000" stroke-width="1"/><rect x="0.600" y="8" width="3" height="3" fill="#fff" stroke="#000" stroke-width="1"/><rect x="0.600" y="15.400" width="3" height="3" fill="#fff" stroke="#000" stroke-width="1"/><path d="M10 4.500l5 5-5 5-5-5z" fill="#10d010" stroke="#000" stroke-width="1.100"/><path d="M10 7v5M7.500 9.500h5" stroke="#004000" stroke-width="1.300"/><circle cx="19.500" cy="9.500" r="1.800" fill="#fff" stroke="#1f3dff" stroke-width="1.300"/></svg>
<div class="a" style="left:1557px;top:186px;width:0;height:19px;border-left:1px dotted #555;border-right:1px dotted #fff"></div>
<div class="a t" style="left:1571.5px;top:186px;">Search:</div>
<div class="a sunk" style="left:1626px;top:183px;width:143px;height:23px;background:#fff"></div>
<div class="a rbtn" style="left:1772px;top:183px;width:22px;height:23px;"></div>
<svg class="a" style="left:1775px;top:191px" width="16" height="9"><path d="M0.5 0.5h15l-7.5 8z" fill="#000"/></svg>
<svg class="a" style="left:1800px;top:184px" width="21" height="20" viewBox="0 0 21 20"><g transform="translate(3,0)"><path d="M4 1.500h3.500v3l1 2.500v7h-7.500v-5l2-4.500zM11 1.500h3.500l1 3 2 4.500v5h-7.500v-7l1-2.500z" fill="#909090"/><path d="M1 4h17M1 6.500h17M1 9h17M1 11.500h17M3.500 1v13M6 1v13M9 1v13M12 1v13M15 1v13" stroke="#f0f0f0" stroke-width="0.800"/></g><path d="M0.500 16l3.500-3.500v2.500h2l0-2.500 3.500 3.500-3.500 3.500v-2.500h-2v2.500z" fill="#4a5aff" opacity="0.850"/></svg>
<svg class="a" style="left:1825px;top:184px" width="21" height="20" viewBox="0 0 21 20"><path d="M4 1.500h3.500v3l1 2.500v7h-7.500v-5l2-4.500zM11 1.500h3.500l1 3 2 4.500v5h-7.500v-7l1-2.500z" fill="#909090"/><path d="M1 4h17M1 6.500h17M1 9h17M1 11.500h17M3.500 1v13M6 1v13M9 1v13M12 1v13M15 1v13" stroke="#f0f0f0" stroke-width="0.800"/><path d="M11.500 16l3.500-3.500v2.500h2l0-2.500 3.500 3.500-3.500 3.500v-2.500h-2v2.500z" fill="#4a5aff" opacity="0.850"/></svg>
<svg class="a" style="left:1855px;top:184px" width="22" height="21" viewBox="0 0 22 21"><path d="M4 1h3.500v3l1 2.500v7.500h-7.500v-5l2-4.500zM10.500 1h3.500l1 3 2 4.500v5.500h-7v-7.500l0.500-2.500z" fill="#2a3040"/><path d="M3 9.500h3.500M4.700 9.500v3.500" stroke="#c0c8d0" stroke-width="1"/><path d="M6.500 19.500l8-8" stroke="#6a9ae8" stroke-width="4" stroke-linecap="round"/><path d="M13 8l3-2.500 3 0.500-1.500 2 1.500 1.500 2.500-1 0 3-3 2.500-3-0.500z" fill="#d0d0d0" stroke="#a0a0a0" stroke-width="0.600"/></svg>
<div class="a tb" style="left:189px;top:215px;width:242px;height:40px;"></div>
<div class="a" style="left:192px;top:218px;width:3px;height:35px;border-right:1px solid #696969;background:#fff;"></div>
<div class="a" style="left:192px;top:252px;width:3px;height:1px;background:#696969"></div>
<div class="a sunk" style="left:209px;top:223px;width:23px;height:23px;background:#fff;"></div>
<svg class="a" style="left:210px;top:227px" width="21" height="19" viewBox="0 0 21 19"><path d="M10.500 1v16" stroke="#1f8f2f" stroke-width="1.300"/><path d="M1 17h19" stroke="#1f8f2f" stroke-width="1.300" stroke-dasharray="1.500 0.700"/></svg>
<div class="a rbtn" style="left:240px;top:223px;width:25px;height:24px;"></div>
<svg class="a" style="left:242px;top:225px" width="21" height="21" viewBox="0 0 21 21"><rect x="6" y="0.500" width="9.500" height="20" fill="#101f8f"/><path d="M0.500 18.500h8v-16h4v16h8" fill="none" stroke="#1f8f2f" stroke-width="1.200"/><path d="M10.500 4v13" stroke="#000" stroke-width="1" stroke-dasharray="1 1"/></svg>
<div class="a rbtn" style="left:273px;top:223px;width:25px;height:24px;"></div>
<svg class="a" style="left:276px;top:225px" width="19" height="21" viewBox="0 0 19 21"><rect x="1" y="0.500" width="17" height="20" fill="#005800"/><path d="M0.500 18.500h3v-15h3v15h5v-15h3v15h4" fill="none" stroke="#0a8a1a" stroke-width="1.200"/></svg>
<div class="a" style="left:307px;top:226px;width:0;height:19px;border-left:1px dotted #555;border-right:1px dotted #fff"></div>
<svg class="a" style="left:319px;top:225px" width="21" height="21" viewBox="0 0 21 21"><rect x="0.500" y="0.500" width="20" height="20" fill="#6a78b8"/><path d="M0.500 2h20M0.500 4.500h20M0.500 7h20M0.500 9.500h20M0.500 12h20M0.500 14.500h20M0.500 17h20M0.500 19.500h20" stroke="#c8d0e8" stroke-width="0.900" stroke-dasharray="1.200 1.200"/><path d="M1 18.500h9v-16h9" fill="none" stroke="#7ab88a" stroke-width="1.200" stroke-dasharray="1.500 1"/></svg>
<svg class="a" style="left:347px;top:225px" width="19" height="21" viewBox="0 0 19 21"><rect x="5" y="0.500" width="7" height="20" fill="#6a78b8"/><path d="M5 2h7M5 4.500h7M5 7h7M5 9.500h7M5 12h7M5 14.500h7M5 17h7M5 19.500h7" stroke="#d8dcf0" stroke-width="0.900" stroke-dasharray="1.200 1.200"/><path d="M5.500 1v18" stroke="#f0d840" stroke-width="1.300" stroke-dasharray="1.500 1"/><path d="M0.500 18.500h5M11 2.500h7.500" fill="none" stroke="#3a9a4a" stroke-width="1.300" stroke-dasharray="1.500 1"/></svg>
<svg class="a" style="left:375px;top:226px" width="19" height="19" viewBox="0 0 19 19"><path d="M0.500 17.500h9v-16h9" fill="none" stroke="#3a9a4a" stroke-width="1.400" stroke-dasharray="1.500 1.100"/></svg>
<svg class="a" style="left:402px;top:226px" width="19" height="19" viewBox="0 0 19 19"><path d="M0.500 17.500h7M10 1.500h8.500" fill="none" stroke="#3a9a4a" stroke-width="1.400" stroke-dasharray="1.500 1.100"/><path d="M9 0.500v17.500" stroke="#f0d840" stroke-width="1.400" stroke-dasharray="1.600 0.900"/></svg>
<div class="a tb" style="left:963px;top:215px;width:225px;height:40px;"></div>
<div class="a" style="left:966px;top:218px;width:3px;height:35px;border-right:1px solid #696969;background:#fff;"></div>
<div class="a" style="left:966px;top:252px;width:3px;height:1px;background:#696969"></div>
<div class="a sunk" style="left:982px;top:223px;width:24px;height:23px;background:#fff;"></div>
<svg class="a" style="left:988px;top:226px" width="12" height="19" viewBox="0 0 12 19"><path d="M1 0.500v14l3.500-3.500 3 7.500 2.500-1-3-7.500h5z" fill="#000"/></svg>
<div class="a rbtn" style="left:1014px;top:223px;width:25px;height:24px;"></div>
<svg class="a" style="left:1017px;top:226px" width="19" height="19" viewBox="0 0 19 19"><path d="M1 8v-7h9" fill="none" stroke="#000" stroke-width="1.400"/><rect x="5.500" y="5.500" width="8" height="8" fill="none" stroke="#000" stroke-width="2.400"/><path d="M10 18h8v-8" fill="none" stroke="#000" stroke-width="1.400"/><path d="M13 13l5 5" stroke="#000" stroke-width="1.600"/></svg>
<div class="a rbtn" style="left:1046px;top:223px;width:25px;height:24px;"></div>
<svg class="a" style="left:1048px;top:225px" width="21" height="21" viewBox="0 0 21 21"><path d="M10.500 0.500l3.500 4h-2.500v4.500h4.500v-2.500l4 4-4 4v-2.500h-4.500v4.500h2.500l-3.500 4-3.500-4h2.500v-4.500h-4.500v2.500l-4-4 4-4v2.500h4.500v-4.500h-2.500z" fill="#fdfdfd" stroke="#5a5a5a" stroke-width="1.100" stroke-dasharray="1.300 0.700"/></svg>
<div class="a rbtn" style="left:1079px;top:223px;width:25px;height:24px;"></div>
<svg class="a" style="left:1083px;top:226px" width="17" height="18" viewBox="0 0 17 18"><path d="M4 0.500v14M12.500 0.500v14" stroke="#000" stroke-width="1.400"/><rect x="1" y="14" width="6" height="3" fill="#fff" stroke="#000" stroke-width="1.200"/><rect x="9.500" y="14" width="6" height="3" fill="#fff" stroke="#000" stroke-width="1.200"/></svg>
<div class="a rbtn" style="left:1111px;top:223px;width:25px;height:24px;"></div>
<svg class="a" style="left:1114px;top:226px" width="19" height="18" viewBox="0 0 19 18"><path d="M1 1.500h8.500v15h9" fill="none" stroke="#000" stroke-width="1.400"/><path d="M12 1.500h6.500" stroke="#000" stroke-width="1.200" stroke-dasharray="1.200 1.200"/><path d="M13 2v14" stroke="#000" stroke-width="1" stroke-dasharray="1 1.500"/><path d="M0.500 7.500h4M0.500 13h4" stroke="#000" stroke-width="1.300"/><path d="M3.500 5.500l2.500 2-2.500 2zM3.500 11l2.500 2-2.500 2zM18 3l-2.500 2 2.500 2zM18 9l-2.500 2 2.500 2z" fill="#000"/></svg>
<div class="a" style="left:1146px;top:226px;width:0;height:19px;border-left:1px dotted #555;border-right:1px dotted #fff"></div>
<svg class="a" style="left:1157px;top:225px" width="21" height="21" viewBox="0 0 21 21"><rect x="0.500" y="0.500" width="10" height="20" rx="1" fill="#000"/><circle cx="5.500" cy="4.500" r="3.300" fill="#f03018"/><circle cx="5.500" cy="10.500" r="2.300" fill="#f0e030"/><circle cx="5.500" cy="16.500" r="2.600" fill="#40b040"/><path d="M13.500 5.500v10l6.500-5z" fill="#fff" stroke="#000" stroke-width="1.200"/><path d="M11 8.500h2M11 12.500h2" stroke="#60a0f0" stroke-width="1"/></svg>
<div class="a tb" style="left:747px;top:255px;width:136px;height:40px;"></div>
<div class="a" style="left:750px;top:258px;width:3px;height:35px;border-right:1px solid #696969;background:#fff;"></div>
<div class="a" style="left:750px;top:292px;width:3px;height:1px;background:#696969"></div>
<svg class="a" style="left:766px;top:264px" width="19" height="19" viewBox="0 0 19 19"><path d="M1.500 1l10 17M11.500 1l-10 17" stroke="#b07840" stroke-width="1.400" stroke-dasharray="2 0.800"/><path d="M1.500 1l10 17M11.500 1l-10 17" stroke="#8a1a1a" stroke-width="1" stroke-dasharray="0.800 3.500"/><path d="M12 9.500l6.500-6v12z" fill="#666"/><path d="M13 9.500l5-4.500M13.500 9.500l5 4.500" stroke="#aaa" stroke-width="0.700"/></svg>
<svg class="a" style="left:792px;top:264px" width="19" height="19" viewBox="0 0 19 19"><g transform="translate(6,0)"><path d="M1.500 1l10 17M11.500 1l-10 17" stroke="#b07840" stroke-width="1.400" stroke-dasharray="2 0.800"/><path d="M1.500 1l10 17M11.500 1l-10 17" stroke="#8a1a1a" stroke-width="1" stroke-dasharray="0.800 3.500"/></g><path d="M7 9.500l-6.500-6v12z" fill="#666"/><path d="M6 9.500l-5-4.500M5.500 9.500l-5 4.500" stroke="#aaa" stroke-width="0.700"/></svg>
<div class="a rbtn" style="left:820px;top:263px;width:25px;height:24px;"></div>
<svg class="a" style="left:825px;top:266px" width="15" height="18" viewBox="0 0 15 18"><path d="M1 1h8l5 5v11h-13z" fill="#fff" stroke="#222" stroke-width="1.300" stroke-dasharray="1.300 1.100"/><path d="M9 1v5h5" fill="none" stroke="#222" stroke-width="1" stroke-dasharray="1 1"/><path d="M4 5l1.500 1.500M10 9l-1.500 1M4 10l1.500-1M7 13l1 1" stroke="#f03010" stroke-width="1.400"/><path d="M3.500 8h7" stroke="#222" stroke-width="1" stroke-dasharray="1 1"/></svg>
<svg class="a" style="left:856px;top:265px" width="18" height="20" viewBox="0 0 18 20"><path d="M1 3l10 7M10 0.500l-9 13" stroke="#b07840" stroke-width="1.500"/><path d="M11.500 1.500l-10 12.500" stroke="#999" stroke-width="1"/><path d="M8 11.500l5-5 4 4.500-1 6-3.500 2z" fill="#3a4aff"/><path d="M8 12h9M9 14.500h8M10 17h6M10 9.500h6" stroke="#222" stroke-width="0.900" stroke-dasharray="1 1"/></svg>
<div class="a " style="left:0px;top:295px;width:1919px;height:1px;background:#fff"></div>
<div class="a " style="left:185px;top:297px;width:2px;height:562px;background:#fafafa"></div>
<div class="a " style="left:187px;top:297px;width:7px;height:562px;background:#c8c8c8"></div>
<div class="a " style="left:380px;top:296px;width:7px;height:563px;background:#c8c8c8"></div>
<div class="a " style="left:194px;top:573px;width:186px;height:9px;background:#c8c8c8"></div>
<div class="a " style="left:0px;top:859px;width:1919px;height:8px;background:#c8c8c8"></div>
<div class="a " style="left:0px;top:296px;width:185px;height:563px;background:#f0f0f0;border-left:1px solid #fff;border-right:1px solid #a8a8a8;border-top:1px solid #a8a8a8"></div>
<svg class="a" style="left:4px;top:300px" width="21" height="21" viewBox="0 0 21 21"><path d="M7 1.500h10c3 0 3.500 3 2.500 5l-3 8h-12l3-8c1-2 0.500-4-1-5z" fill="#fff" stroke="#111" stroke-width="1.300"/><path d="M9 4.500h8M8.500 7h8M7.500 9.500h8M6.500 12h8" stroke="#2a3ab0" stroke-width="1.200" stroke-dasharray="2.500 1"/><path d="M11 3v10M14 3v10" stroke="#fff" stroke-width="0.800"/><path d="M0.500 2h3.500M0.500 4.500h3.500M0.500 7h3.500M0.500 9.500h2.500" stroke="#6a7ad8" stroke-width="1"/><path d="M5 12.500l4.500 4-4.500 4-4.500-4z" fill="#e01808" stroke="#1a0000" stroke-width="1.400"/><circle cx="17" cy="17" r="2.800" fill="#e01808" stroke="#1a0000" stroke-width="1.400"/></svg>
<div class="a " style="left:28px;top:302px;width:65px;height:17px;overflow:hidden"><div class="a t" style="right:0;top:0;letter-spacing:0.15px">sim - Default</div></div>
<div class="a" style="left:97px;top:306px;width:22px;height:1px;background:repeating-linear-gradient(90deg,#555 0 1px,transparent 1px 3px)"></div>
<div class="a" style="left:98px;top:309px;width:22px;height:1px;background:repeating-linear-gradient(90deg,#555 0 1px,transparent 1px 3px)"></div>
<div class="a" style="left:97px;top:312px;width:22px;height:1px;background:repeating-linear-gradient(90deg,#555 0 1px,transparent 1px 3px)"></div>
<div class="a sb" style="left:123px;top:302px;width:16px;height:16px;background:#f0f0f0"></div>
<svg class="a" style="left:125px;top:303px" width="12" height="12"><path d="M6 1v10M1 6h10" stroke="#000" stroke-width="2"/></svg>
<div class="a sb" style="left:144px;top:302px;width:16px;height:16px;background:#f0f0f0"></div>
<svg class="a" style="left:146px;top:303px" width="12" height="12"><path d="M1.5 5.5h5v5h-5z" fill="none" stroke="#000" stroke-width="1.2"/><path d="M4.5 7.5l5.5-5.5M6 1.5h4.5v4.5" fill="none" stroke="#000" stroke-width="1.6"/></svg>
<div class="a sb" style="left:165px;top:302px;width:16px;height:16px;background:#f0f0f0"></div>
<svg class="a" style="left:167px;top:303px" width="12" height="12"><path d="M1.5 1.5l9 9M10.5 1.5l-9 9" stroke="#000" stroke-width="1.7"/></svg>
<div class="a hdr" style="left:3px;top:322px;width:16px;height:22px;"></div>
<svg class="a" style="left:5px;top:327px" width="11" height="9"><path d="M0.5 0.5h10l-5 8z" fill="#555"/><path d="M0.5 0.5h10" stroke="#222" stroke-width="1"/></svg>
<div class="a hdr" style="left:19px;top:322px;width:165px;height:22px;"></div>
<div class="a t" style="left:21px;top:326px;">Instance</div>
<div class="a " style="left:3px;top:344px;width:181px;height:465px;background:#fff;border-left:1px solid #a0a0a0"></div>
<div class="a " style="left:4px;top:348px;width:178px;height:18px;background:#c1cde0"></div>
<div class="a " style="left:23px;top:357px;width:9px;height:1px;background:#808080"></div>
<div class="a " style="left:39px;top:366px;width:1px;height:111px;background:#808080"></div>
<div class="a " style="left:45px;top:377px;width:8px;height:1px;background:#808080"></div>
<div class="a " style="left:45px;top:397px;width:8px;height:1px;background:#808080"></div>
<div class="a " style="left:45px;top:417px;width:8px;height:1px;background:#808080"></div>
<div class="a " style="left:39px;top:437px;width:14px;height:1px;background:#808080"></div>
<div class="a " style="left:39px;top:457px;width:14px;height:1px;background:#808080"></div>
<div class="a " style="left:39px;top:477px;width:14px;height:1px;background:#808080"></div>
<div class="a " style="left:17px;top:357px;width:1px;height:4px;background:#808080"></div>
<svg class="a" style="left:11px;top:352px" width="13" height="13"><defs><linearGradient id="pmg" x1="0" y1="0" x2="0" y2="1"><stop offset="0.5" stop-color="#fff"/><stop offset="1" stop-color="#d4dcec"/></linearGradient></defs><rect x="0.5" y="0.5" width="11.5" height="11.5" rx="1.5" fill="url(#pmg)" stroke="#98a0b0"/><path d="M3 6.25h6.5" stroke="#000" stroke-width="1.3"/></svg>
<svg class="a" style="left:33px;top:372px" width="13" height="13"><defs><linearGradient id="pmg" x1="0" y1="0" x2="0" y2="1"><stop offset="0.5" stop-color="#fff"/><stop offset="1" stop-color="#d4dcec"/></linearGradient></defs><rect x="0.5" y="0.5" width="11.5" height="11.5" rx="1.5" fill="url(#pmg)" stroke="#98a0b0"/><path d="M3 6.25h6.5M6.25 3v6.5" stroke="#000" stroke-width="1.3"/></svg>
<svg class="a" style="left:33px;top:392px" width="13" height="13"><defs><linearGradient id="pmg" x1="0" y1="0" x2="0" y2="1"><stop offset="0.5" stop-color="#fff"/><stop offset="1" stop-color="#d4dcec"/></linearGradient></defs><rect x="0.5" y="0.5" width="11.5" height="11.5" rx="1.5" fill="url(#pmg)" stroke="#98a0b0"/><path d="M3 6.25h6.5M6.25 3v6.5" stroke="#000" stroke-width="1.3"/></svg>
<svg class="a" style="left:33px;top:412px" width="13" height="13"><defs><linearGradient id="pmg" x1="0" y1="0" x2="0" y2="1"><stop offset="0.5" stop-color="#fff"/><stop offset="1" stop-color="#d4dcec"/></linearGradient></defs><rect x="0.5" y="0.5" width="11.5" height="11.5" rx="1.5" fill="url(#pmg)" stroke="#98a0b0"/><path d="M3 6.25h6.5M6.25 3v6.5" stroke="#000" stroke-width="1.3"/></svg>
<svg class="a" style="left:31px;top:350px" width="15" height="15" viewBox="0 0 15 15"><rect x="0" y="0" width="15" height="15" fill="#2a2aa8"/><path d="M0 0h15l-3.500 3.500h-8l0 8l-3.500 3.500z" fill="#5f87f2"/><rect x="3.500" y="3.500" width="8" height="8" fill="#1a40e6"/><path d="M15 0l-3.500 3.500M0 15l3.500-3.500" stroke="#0a0a30" stroke-width="1.300"/><path d="M11.500 0l3.500 0 0 1.500zM0 15l0-3 2 3z" fill="#0a0a30"/></svg>
<div class="a t" style="left:54px;top:349px;">alu</div>
<svg class="a" style="left:53px;top:370px" width="15" height="15" viewBox="0 0 15 15"><rect x="0" y="0" width="15" height="15" fill="#2a2aa8"/><path d="M0 0h15l-3.500 3.500h-8l0 8l-3.500 3.500z" fill="#5f87f2"/><rect x="3.500" y="3.500" width="8" height="8" fill="#1a40e6"/><path d="M15 0l-3.500 3.500M0 15l3.500-3.500" stroke="#0a0a30" stroke-width="1.300"/><path d="M11.500 0l3.500 0 0 1.500zM0 15l0-3 2 3z" fill="#0a0a30"/></svg>
<div class="a t" style="left:77px;top:369px;">Adder_Unit</div>
<svg class="a" style="left:53px;top:390px" width="15" height="15" viewBox="0 0 15 15"><rect x="0" y="0" width="15" height="15" fill="#2a2aa8"/><path d="M0 0h15l-3.500 3.500h-8l0 8l-3.500 3.500z" fill="#5f87f2"/><rect x="3.500" y="3.500" width="8" height="8" fill="#1a40e6"/><path d="M15 0l-3.500 3.500M0 15l3.500-3.500" stroke="#0a0a30" stroke-width="1.300"/><path d="M11.500 0l3.500 0 0 1.500zM0 15l0-3 2 3z" fill="#0a0a30"/></svg>
<div class="a t" style="left:77px;top:389px;">Multiplier_Unit</div>
<svg class="a" style="left:53px;top:410px" width="15" height="15" viewBox="0 0 15 15"><rect x="0" y="0" width="15" height="15" fill="#2a2aa8"/><path d="M0 0h15l-3.500 3.500h-8l0 8l-3.500 3.500z" fill="#5f87f2"/><rect x="3.500" y="3.500" width="8" height="8" fill="#1a40e6"/><path d="M15 0l-3.500 3.500M0 15l3.500-3.500" stroke="#0a0a30" stroke-width="1.300"/><path d="M11.500 0l3.500 0 0 1.500zM0 15l0-3 2 3z" fill="#0a0a30"/></svg>
<div class="a t" style="left:77px;top:409px;">Comparator_U...</div>
<svg class="a" style="left:52px;top:430px" width="16" height="16" viewBox="0 0 16 16"><defs><radialGradient id="bg1" cx="0.35" cy="0.3" r="0.75"><stop offset="0" stop-color="#c8d8ff"/><stop offset="0.25" stop-color="#4a6af0"/><stop offset="0.7" stop-color="#1a2ad0"/><stop offset="1" stop-color="#0a1480"/></radialGradient></defs><circle cx="8" cy="8" r="7.500" fill="url(#bg1)"/></svg>
<div class="a t" style="left:75px;top:429px;">line__55</div>
<svg class="a" style="left:52px;top:450px" width="16" height="16" viewBox="0 0 16 16"><defs><radialGradient id="bg1" cx="0.35" cy="0.3" r="0.75"><stop offset="0" stop-color="#c8d8ff"/><stop offset="0.25" stop-color="#4a6af0"/><stop offset="0.7" stop-color="#1a2ad0"/><stop offset="1" stop-color="#0a1480"/></radialGradient></defs><circle cx="8" cy="8" r="7.500" fill="url(#bg1)"/></svg>
<div class="a t" style="left:75px;top:449px;">line__86</div>
<svg class="a" style="left:52px;top:470px" width="16" height="16" viewBox="0 0 16 16"><defs><radialGradient id="bg1" cx="0.35" cy="0.3" r="0.75"><stop offset="0" stop-color="#c8d8ff"/><stop offset="0.25" stop-color="#4a6af0"/><stop offset="0.7" stop-color="#1a2ad0"/><stop offset="1" stop-color="#0a1480"/></radialGradient></defs><circle cx="8" cy="8" r="7.500" fill="url(#bg1)"/></svg>
<div class="a t" style="left:75px;top:469px;">line__56</div>
<svg class="a" style="left:31px;top:490px" width="15" height="15" viewBox="0 0 15 15"><rect x="0" y="0" width="15" height="15" fill="#2a2aa8"/><path d="M0 0h15l-3.500 3.500h-8l0 8l-3.500 3.500z" fill="#5f87f2"/><rect x="3.500" y="3.500" width="8" height="8" fill="#1a40e6"/><path d="M15 0l-3.500 3.500M0 15l3.500-3.500" stroke="#0a0a30" stroke-width="1.300"/><path d="M11.500 0l3.500 0 0 1.500zM0 15l0-3 2 3z" fill="#0a0a30"/></svg>
<div class="a t" style="left:54px;top:489px;">standard</div>
<svg class="a" style="left:31px;top:510px" width="15" height="15" viewBox="0 0 15 15"><rect x="0" y="0" width="15" height="15" fill="#2a2aa8"/><path d="M0 0h15l-3.500 3.500h-8l0 8l-3.500 3.500z" fill="#5f87f2"/><rect x="3.500" y="3.500" width="8" height="8" fill="#1a40e6"/><path d="M15 0l-3.500 3.500M0 15l3.500-3.500" stroke="#0a0a30" stroke-width="1.300"/><path d="M11.500 0l3.500 0 0 1.500zM0 15l0-3 2 3z" fill="#0a0a30"/></svg>
<div class="a t" style="left:54px;top:509px;">textio</div>
<svg class="a" style="left:31px;top:530px" width="15" height="15" viewBox="0 0 15 15"><rect x="0" y="0" width="15" height="15" fill="#2a2aa8"/><path d="M0 0h15l-3.500 3.500h-8l0 8l-3.500 3.500z" fill="#5f87f2"/><rect x="3.500" y="3.500" width="8" height="8" fill="#1a40e6"/><path d="M15 0l-3.500 3.500M0 15l3.500-3.500" stroke="#0a0a30" stroke-width="1.300"/><path d="M11.500 0l3.500 0 0 1.500zM0 15l0-3 2 3z" fill="#0a0a30"/></svg>
<div class="a t" style="left:54px;top:529px;">std_logic_1164</div>
<svg class="a" style="left:31px;top:550px" width="15" height="15" viewBox="0 0 15 15"><rect x="0" y="0" width="15" height="15" fill="#2a2aa8"/><path d="M0 0h15l-3.500 3.500h-8l0 8l-3.500 3.500z" fill="#5f87f2"/><rect x="3.500" y="3.500" width="8" height="8" fill="#1a40e6"/><path d="M15 0l-3.500 3.500M0 15l3.500-3.500" stroke="#0a0a30" stroke-width="1.300"/><path d="M11.500 0l3.500 0 0 1.500zM0 15l0-3 2 3z" fill="#0a0a30"/></svg>
<div class="a t" style="left:54px;top:549px;">numeric_std</div>
<div class="a trough" style="left:3px;top:809px;width:181px;height:18px;"></div>
<div class="a sb" style="left:3px;top:809px;width:18px;height:18px;"></div>
<svg class="a" style="left:0;top:0;pointer-events:none" width="1919" height="1022"><path d="M14.0 814.0v8l-5-4z" fill="#000"/></svg>
<div class="a sb" style="left:166px;top:809px;width:18px;height:18px;"></div>
<svg class="a" style="left:0;top:0;pointer-events:none" width="1919" height="1022"><path d="M173.0 814.0v8l5-4z" fill="#000"/></svg>
<div class="a sb" style="left:22px;top:809px;width:30px;height:18px;"></div>
<div class="a " style="left:0px;top:830px;width:185px;height:1px;background:#555"></div>
<div class="a " style="left:0px;top:831px;width:81px;height:26px;background:#c8c8c8;border:1px solid #444;border-width:0 1px 2px 0;border-radius:0 0 4px 0"></div>
<svg class="a" style="left:-1px;top:832px" width="8" height="20" viewBox="0 0 8 20"><rect x="-4" y="3" width="10" height="15" fill="#fff" stroke="#333" stroke-width="1.200"/><path d="M1.500 0.500v6M-0.500 4l2 2.500 2-2.500" stroke="#1a2ab0" stroke-width="1.300" fill="none"/><path d="M0 10h4M0 13h4" stroke="#333" stroke-width="1" stroke-dasharray="1 1"/></svg>
<div class="a t" style="left:12px;top:835px;">Project</div>
<div class="a t" style="left:65px;top:835px;color:#a8a8a8;font-size:17px;font-weight:bold">&#215;</div>
<div class="a " style="left:81px;top:830px;width:74px;height:28px;background:#f0f0f0;border:1px solid #222;border-width:0 2px 2px 1px;border-radius:0 0 4px 4px"></div>
<svg class="a" style="left:87px;top:833px" width="21" height="21" viewBox="0 0 21 21"><path d="M7 1.500h10c3 0 3.500 3 2.500 5l-3 8h-12l3-8c1-2 0.500-4-1-5z" fill="#fff" stroke="#111" stroke-width="1.300"/><path d="M9 4.500h8M8.500 7h8M7.500 9.500h8M6.500 12h8" stroke="#2a3ab0" stroke-width="1.200" stroke-dasharray="2.500 1"/><path d="M11 3v10M14 3v10" stroke="#fff" stroke-width="0.800"/><path d="M0.500 2h3.500M0.500 4.500h3.500M0.500 7h3.500M0.500 9.500h2.500" stroke="#6a7ad8" stroke-width="1"/><path d="M5 12.500l4.500 4-4.500 4-4.500-4z" fill="#e01808" stroke="#1a0000" stroke-width="1.400"/><circle cx="17" cy="17" r="2.800" fill="#e01808" stroke="#1a0000" stroke-width="1.400"/></svg>
<div class="a t" style="left:111px;top:835px;">sim</div>
<div class="a t" style="left:138px;top:835px;color:#b8b8b8;font-size:17px;font-weight:bold">&#215;</div>
<div class="a " style="left:155px;top:831px;width:4px;height:1px;background:#222"></div>
<div class="a sb" style="left:159px;top:834px;width:14px;height:17px;"></div>
<svg class="a" style="left:0;top:0;pointer-events:none" width="1919" height="1022"><path d="M168.0 838.5v8l-5-4z" fill="#000"/></svg>
<div class="a sb" style="left:173px;top:834px;width:14px;height:17px;"></div>
<svg class="a" style="left:0;top:0;pointer-events:none" width="1919" height="1022"><path d="M178.0 838.5v8l5-4z" fill="#888"/></svg>
<div class="a " style="left:194px;top:296px;width:186px;height:277px;background:#f0f0f0;border-left:1px solid #a8a8a8;border-top:1px solid #a8a8a8;border-right:1px solid #a0a0a0;border-bottom:1px solid #a0a0a0;box-shadow:inset 1px 1px 0 #fff"></div>
<svg class="a" style="left:197px;top:299px" width="21" height="21" viewBox="0 0 21 21"><path d="M11 12l9-6v13h-13z" fill="#30c030"/><path d="M9 18h11M10 16h10M12 14h8M14 12h6M16 10h4" stroke="#107010" stroke-width="0.800" stroke-dasharray="1 1"/><path d="M1 7.500l6-7 5 3-5 7z" fill="#b030d0"/><path d="M7 8.500l6.500 6.500-6.500 6-6.500-6z" fill="#1848f0"/><ellipse cx="12.500" cy="8" rx="4.500" ry="3.800" fill="#10e0ff"/></svg>
<div class="a t" style="left:222px;top:302px;">Objects</div>
<div class="a" style="left:276px;top:306px;width:36px;height:1px;background:repeating-linear-gradient(90deg,#555 0 1px,transparent 1px 3px)"></div>
<div class="a" style="left:277px;top:309px;width:36px;height:1px;background:repeating-linear-gradient(90deg,#555 0 1px,transparent 1px 3px)"></div>
<div class="a" style="left:276px;top:312px;width:36px;height:1px;background:repeating-linear-gradient(90deg,#555 0 1px,transparent 1px 3px)"></div>
<div class="a sb" style="left:317px;top:302px;width:16px;height:16px;background:#f0f0f0"></div>
<svg class="a" style="left:319px;top:303px" width="12" height="12"><path d="M6 1v10M1 6h10" stroke="#000" stroke-width="2"/></svg>
<div class="a sb" style="left:338px;top:302px;width:16px;height:16px;background:#f0f0f0"></div>
<svg class="a" style="left:340px;top:303px" width="12" height="12"><path d="M1.5 5.5h5v5h-5z" fill="none" stroke="#000" stroke-width="1.2"/><path d="M4.5 7.5l5.5-5.5M6 1.5h4.5v4.5" fill="none" stroke="#000" stroke-width="1.6"/></svg>
<div class="a sb" style="left:359px;top:302px;width:16px;height:16px;background:#f0f0f0"></div>
<svg class="a" style="left:361px;top:303px" width="12" height="12"><path d="M1.5 1.5l9 9M10.5 1.5l-9 9" stroke="#000" stroke-width="1.7"/></svg>
<div class="a hdr" style="left:197px;top:322px;width:15px;height:22px;"></div>
<svg class="a" style="left:199px;top:327px" width="11" height="9"><path d="M0.5 0.5h10l-5 8z" fill="#555"/><path d="M0.5 0.5h10" stroke="#222" stroke-width="1"/></svg>
<div class="a hdr" style="left:212px;top:322px;width:142px;height:22px;"></div>
<div class="a " style="left:213px;top:325px;width:5px;height:17px;overflow:hidden"><div class="a t" style="left:1px;top:1px">Name</div></div>
<div class="a " style="left:218px;top:323px;width:22px;height:20px;background:#e6f2e1;border:1px solid #999"></div>
<svg class="a" style="left:221px;top:326px" width="17" height="15" viewBox="0 0 17 15"><path d="M1 1.500h4v12h6" fill="none" stroke="#000" stroke-width="1.500"/><path d="M7.500 6.500l4.500-4.500v3h4v3h-4v3z" fill="#777"/><path d="M8.500 6.500l3.500-3.500M8.500 6.500l3.500 3.500" stroke="#222" stroke-width="1.100"/></svg>
<div class="a " style="left:240px;top:323px;width:79px;height:20px;background:#e6f2e1;border:1px solid #999;border-left:none"></div>
<svg class="a" style="left:245px;top:328px" width="10" height="10"><circle cx="5" cy="5" r="4.3" fill="#00c400" stroke="#007000" stroke-width="0.8"/></svg>
<div class="a m" style="left:261px;top:326.5px;">713 ps</div>
<div class="a " style="left:319px;top:323px;width:22px;height:20px;background:#e6f2e1;border:1px solid #999;border-left:none"></div>
<svg class="a" style="left:322px;top:326px" width="17" height="15" viewBox="0 0 17 15"><path d="M7 13.500h5v-12h4" fill="none" stroke="#000" stroke-width="1.500"/><path d="M9.500 6.500l-4.500-4.500v3h-4v3h4v3z" fill="#888"/><path d="M8.500 6.500l-3.500-3.500M8.500 6.500l-3.500 3.500" stroke="#444" stroke-width="1.100"/></svg>
<svg class="a" style="left:343px;top:327px" width="8" height="12"><path d="M1 0.5v11l6-5.5z" fill="#000"/></svg>
<div class="a " style="left:197px;top:344px;width:157px;height:203px;background:#525b8c"></div>
<div class="a " style="left:215px;top:357px;width:8px;height:1px;background:#a0a8c8"></div>
<svg class="a" style="left:204px;top:352px" width="13" height="13"><defs><linearGradient id="pmg" x1="0" y1="0" x2="0" y2="1"><stop offset="0.5" stop-color="#fff"/><stop offset="1" stop-color="#d4dcec"/></linearGradient></defs><rect x="0.5" y="0.5" width="11.5" height="11.5" rx="1.5" fill="url(#pmg)" stroke="#98a0b0"/><path d="M3 6.25h6.5M6.25 3v6.5" stroke="#000" stroke-width="1.3"/></svg>
<svg class="a" style="left:221px;top:347px" width="21" height="20" viewBox="0 0 21 20"><g transform="translate(2,0)"><path d="M9.500 0.500l9 9.500-9 9.500-9-9.500z" fill="#2a2ab8"/><path d="M9.500 0.500l-9 9.500 4.500 0 4.500-5z" fill="#6a96f0"/><path d="M9.500 0.500l9 9.500-4.500 0-4.500-5z" fill="#4060d0"/><path d="M0.500 10l9 9.500 0-5-4.500-4.500z" fill="#3a50d8"/><path d="M9.500 5l4.500 5-4.500 4.500-4.500-4.500z" fill="#2a68f4"/></g><path d="M0.5 12.5h3.500v-2.500l5 4.500-5 4.500v-2.500h-3.500z" fill="#36e000"/><path d="M0.5 12.5m0 2.500h3.500v1.500h-3.500zM0.5 12.5m3.500 4l0 2.500 3-2.800z" fill="#0a8a10"/><path d="M0.5 12.5h3.500v-2.500" fill="none" stroke="#e8ff60" stroke-width="0.800"/></svg>
<div class="a t" style="left:247px;top:349px;color:#fff">Operand1</div>
<div class="a " style="left:215px;top:377px;width:8px;height:1px;background:#a0a8c8"></div>
<svg class="a" style="left:204px;top:372px" width="13" height="13"><defs><linearGradient id="pmg" x1="0" y1="0" x2="0" y2="1"><stop offset="0.5" stop-color="#fff"/><stop offset="1" stop-color="#d4dcec"/></linearGradient></defs><rect x="0.5" y="0.5" width="11.5" height="11.5" rx="1.5" fill="url(#pmg)" stroke="#98a0b0"/><path d="M3 6.25h6.5M6.25 3v6.5" stroke="#000" stroke-width="1.3"/></svg>
<svg class="a" style="left:221px;top:367px" width="21" height="20" viewBox="0 0 21 20"><g transform="translate(2,0)"><path d="M9.500 0.500l9 9.500-9 9.500-9-9.500z" fill="#2a2ab8"/><path d="M9.500 0.500l-9 9.500 4.500 0 4.500-5z" fill="#6a96f0"/><path d="M9.500 0.500l9 9.500-4.500 0-4.500-5z" fill="#4060d0"/><path d="M0.500 10l9 9.500 0-5-4.500-4.500z" fill="#3a50d8"/><path d="M9.500 5l4.500 5-4.500 4.500-4.500-4.500z" fill="#2a68f4"/></g><path d="M0.5 12.5h3.500v-2.500l5 4.500-5 4.500v-2.500h-3.500z" fill="#36e000"/><path d="M0.5 12.5m0 2.500h3.500v1.500h-3.500zM0.5 12.5m3.500 4l0 2.500 3-2.800z" fill="#0a8a10"/><path d="M0.5 12.5h3.500v-2.500" fill="none" stroke="#e8ff60" stroke-width="0.800"/></svg>
<div class="a t" style="left:247px;top:369px;color:#fff">Operand2</div>
<div class="a " style="left:215px;top:397px;width:8px;height:1px;background:#a0a8c8"></div>
<svg class="a" style="left:204px;top:392px" width="13" height="13"><defs><linearGradient id="pmg" x1="0" y1="0" x2="0" y2="1"><stop offset="0.5" stop-color="#fff"/><stop offset="1" stop-color="#d4dcec"/></linearGradient></defs><rect x="0.5" y="0.5" width="11.5" height="11.5" rx="1.5" fill="url(#pmg)" stroke="#98a0b0"/><path d="M3 6.25h6.5M6.25 3v6.5" stroke="#000" stroke-width="1.3"/></svg>
<svg class="a" style="left:221px;top:387px" width="21" height="20" viewBox="0 0 21 20"><g transform="translate(2,0)"><path d="M9.500 0.500l9 9.500-9 9.500-9-9.500z" fill="#2a2ab8"/><path d="M9.500 0.500l-9 9.500 4.500 0 4.500-5z" fill="#6a96f0"/><path d="M9.500 0.500l9 9.500-4.500 0-4.500-5z" fill="#4060d0"/><path d="M0.500 10l9 9.500 0-5-4.500-4.500z" fill="#3a50d8"/><path d="M9.500 5l4.500 5-4.500 4.500-4.500-4.500z" fill="#2a68f4"/></g><path d="M0.5 12.5h3.500v-2.500l5 4.500-5 4.500v-2.500h-3.500z" fill="#36e000"/><path d="M0.5 12.5m0 2.500h3.500v1.500h-3.500zM0.5 12.5m3.500 4l0 2.500 3-2.800z" fill="#0a8a10"/><path d="M0.5 12.5h3.500v-2.500" fill="none" stroke="#e8ff60" stroke-width="0.800"/></svg>
<div class="a t" style="left:247px;top:389px;color:#fff">Opcode</div>
<div class="a " style="left:215px;top:417px;width:8px;height:1px;background:#a0a8c8"></div>
<svg class="a" style="left:204px;top:412px" width="13" height="13"><defs><linearGradient id="pmg" x1="0" y1="0" x2="0" y2="1"><stop offset="0.5" stop-color="#fff"/><stop offset="1" stop-color="#d4dcec"/></linearGradient></defs><rect x="0.5" y="0.5" width="11.5" height="11.5" rx="1.5" fill="url(#pmg)" stroke="#98a0b0"/><path d="M3 6.25h6.5M6.25 3v6.5" stroke="#000" stroke-width="1.3"/></svg>
<svg class="a" style="left:220px;top:407px" width="23" height="21" viewBox="0 0 23 21"><path d="M9.500 0.500l9 9.500-9 9.500-9-9.500z" fill="#2a2ab8"/><path d="M9.500 0.500l-9 9.500 4.500 0 4.500-5z" fill="#6a96f0"/><path d="M9.500 0.500l9 9.500-4.500 0-4.500-5z" fill="#4060d0"/><path d="M0.500 10l9 9.500 0-5-4.500-4.500z" fill="#3a50d8"/><path d="M9.500 5l4.500 5-4.500 4.500-4.500-4.500z" fill="#2a68f4"/><path d="M12 14h3.500v-2.500l5 4.500-5 4.500v-2.500h-3.500z" fill="#36e000"/><path d="M12 14m0 2.500h3.500v1.500h-3.500zM12 14m3.500 4l0 2.500 3-2.800z" fill="#0a8a10"/><path d="M12 14h3.500v-2.500" fill="none" stroke="#e8ff60" stroke-width="0.800"/></svg>
<div class="a t" style="left:247px;top:409px;color:#fff">Result</div>
<div class="a " style="left:197px;top:427px;width:157px;height:19px;background:#c1cde0"></div>
<div class="a " style="left:215px;top:437px;width:8px;height:1px;background:#808080"></div>
<svg class="a" style="left:204px;top:432px" width="13" height="13"><defs><linearGradient id="pmg" x1="0" y1="0" x2="0" y2="1"><stop offset="0.5" stop-color="#fff"/><stop offset="1" stop-color="#d4dcec"/></linearGradient></defs><rect x="0.5" y="0.5" width="11.5" height="11.5" rx="1.5" fill="url(#pmg)" stroke="#98a0b0"/><path d="M3 6.25h6.5M6.25 3v6.5" stroke="#000" stroke-width="1.3"/></svg>
<svg class="a" style="left:222px;top:427px" width="19" height="20" viewBox="0 0 19 20"><path d="M9.500 0.500l9 9.500-9 9.500-9-9.500z" fill="#2a2ab8"/><path d="M9.500 0.500l-9 9.500 4.500 0 4.500-5z" fill="#6a96f0"/><path d="M9.500 0.500l9 9.500-4.500 0-4.500-5z" fill="#4060d0"/><path d="M0.500 10l9 9.500 0-5-4.500-4.500z" fill="#3a50d8"/><path d="M9.500 5l4.500 5-4.500 4.500-4.500-4.500z" fill="#2a68f4"/></svg>
<div class="a t" style="left:247px;top:429px;color:#000">adder_B_input</div>
<svg class="a" style="left:222px;top:447px" width="19" height="20" viewBox="0 0 19 20"><path d="M9.500 0.500l9 9.500-9 9.500-9-9.500z" fill="#2a2ab8"/><path d="M9.500 0.500l-9 9.500 4.500 0 4.500-5z" fill="#6a96f0"/><path d="M9.500 0.500l9 9.500-4.500 0-4.500-5z" fill="#4060d0"/><path d="M0.500 10l9 9.500 0-5-4.500-4.500z" fill="#3a50d8"/><path d="M9.500 5l4.500 5-4.500 4.500-4.500-4.500z" fill="#2a68f4"/></svg>
<div class="a t" style="left:247px;top:449px;color:#fff">adder_cin</div>
<div class="a " style="left:215px;top:477px;width:8px;height:1px;background:#a0a8c8"></div>
<svg class="a" style="left:204px;top:472px" width="13" height="13"><defs><linearGradient id="pmg" x1="0" y1="0" x2="0" y2="1"><stop offset="0.5" stop-color="#fff"/><stop offset="1" stop-color="#d4dcec"/></linearGradient></defs><rect x="0.5" y="0.5" width="11.5" height="11.5" rx="1.5" fill="url(#pmg)" stroke="#98a0b0"/><path d="M3 6.25h6.5M6.25 3v6.5" stroke="#000" stroke-width="1.3"/></svg>
<svg class="a" style="left:222px;top:467px" width="19" height="20" viewBox="0 0 19 20"><path d="M9.500 0.500l9 9.500-9 9.500-9-9.500z" fill="#2a2ab8"/><path d="M9.500 0.500l-9 9.500 4.500 0 4.500-5z" fill="#6a96f0"/><path d="M9.500 0.500l9 9.500-4.500 0-4.500-5z" fill="#4060d0"/><path d="M0.500 10l9 9.500 0-5-4.500-4.500z" fill="#3a50d8"/><path d="M9.500 5l4.500 5-4.500 4.500-4.500-4.500z" fill="#2a68f4"/></svg>
<div class="a t" style="left:247px;top:469px;color:#fff">sub_sum</div>
<svg class="a" style="left:222px;top:487px" width="19" height="20" viewBox="0 0 19 20"><path d="M9.500 0.500l9 9.500-9 9.500-9-9.500z" fill="#2a2ab8"/><path d="M9.500 0.500l-9 9.500 4.500 0 4.500-5z" fill="#6a96f0"/><path d="M9.500 0.500l9 9.500-4.500 0-4.500-5z" fill="#4060d0"/><path d="M0.500 10l9 9.500 0-5-4.500-4.500z" fill="#3a50d8"/><path d="M9.500 5l4.500 5-4.500 4.500-4.500-4.500z" fill="#2a68f4"/></svg>
<div class="a t" style="left:247px;top:489px;color:#fff">adder_cout</div>
<div class="a " style="left:215px;top:517px;width:8px;height:1px;background:#a0a8c8"></div>
<svg class="a" style="left:204px;top:512px" width="13" height="13"><defs><linearGradient id="pmg" x1="0" y1="0" x2="0" y2="1"><stop offset="0.5" stop-color="#fff"/><stop offset="1" stop-color="#d4dcec"/></linearGradient></defs><rect x="0.5" y="0.5" width="11.5" height="11.5" rx="1.5" fill="url(#pmg)" stroke="#98a0b0"/><path d="M3 6.25h6.5M6.25 3v6.5" stroke="#000" stroke-width="1.3"/></svg>
<svg class="a" style="left:222px;top:507px" width="19" height="20" viewBox="0 0 19 20"><path d="M9.500 0.500l9 9.500-9 9.500-9-9.500z" fill="#2a2ab8"/><path d="M9.500 0.500l-9 9.500 4.500 0 4.500-5z" fill="#6a96f0"/><path d="M9.500 0.500l9 9.500-4.500 0-4.500-5z" fill="#4060d0"/><path d="M0.500 10l9 9.500 0-5-4.500-4.500z" fill="#3a50d8"/><path d="M9.500 5l4.500 5-4.500 4.500-4.500-4.500z" fill="#2a68f4"/></svg>
<div class="a t" style="left:247px;top:509px;color:#fff">mult_result</div>
<svg class="a" style="left:222px;top:527px" width="19" height="20" viewBox="0 0 19 20"><path d="M9.500 0.500l9 9.500-9 9.500-9-9.500z" fill="#2a2ab8"/><path d="M9.500 0.500l-9 9.500 4.500 0 4.500-5z" fill="#6a96f0"/><path d="M9.500 0.500l9 9.500-4.500 0-4.500-5z" fill="#4060d0"/><path d="M0.500 10l9 9.500 0-5-4.500-4.500z" fill="#3a50d8"/><path d="M9.500 5l4.500 5-4.500 4.500-4.500-4.500z" fill="#2a68f4"/></svg>
<div class="a t" style="left:247px;top:529px;color:#fff">gt_result</div>
<div class="a trough" style="left:358px;top:323px;width:18px;height:224px;"></div>
<div class="a sb" style="left:358px;top:323px;width:18px;height:18px;"></div>
<svg class="a" style="left:0;top:0;pointer-events:none" width="1919" height="1022"><path d="M363.0 334.0h8l-4-4z" fill="#000"/></svg>
<div class="a sb" style="left:358px;top:529px;width:18px;height:18px;"></div>
<svg class="a" style="left:0;top:0;pointer-events:none" width="1919" height="1022"><path d="M363.0 536.0h8l-4 4z" fill="#000"/></svg>
<div class="a sb" style="left:358px;top:343px;width:18px;height:164px;"></div>
<div class="a trough" style="left:197px;top:553px;width:157px;height:18px;"></div>
<div class="a sb" style="left:197px;top:553px;width:18px;height:18px;"></div>
<svg class="a" style="left:0;top:0;pointer-events:none" width="1919" height="1022"><path d="M208.0 558.0v8l-5-4z" fill="#000"/></svg>
<div class="a sb" style="left:336px;top:553px;width:18px;height:18px;"></div>
<svg class="a" style="left:0;top:0;pointer-events:none" width="1919" height="1022"><path d="M343.0 558.0v8l5-4z" fill="#000"/></svg>
<div class="a sb" style="left:215px;top:553px;width:54px;height:18px;"></div>
<div class="a " style="left:194px;top:582px;width:186px;height:277px;background:#f0f0f0;border-left:1px solid #a8a8a8;border-right:1px solid #a0a0a0;border-top:1px solid #a8a8a8;box-shadow:inset 1px 1px 0 #fff"></div>
<svg class="a" style="left:198px;top:585px" width="21" height="21" viewBox="0 0 21 21"><g transform="translate(10.5,10.5)"><g fill="#4a6aa8"><rect x="-2" y="-10" width="4" height="20" rx="1"/><rect x="-2" y="-10" width="4" height="20" rx="1" transform="rotate(45)"/><rect x="-2" y="-10" width="4" height="20" rx="1" transform="rotate(90)"/><rect x="-2" y="-10" width="4" height="20" rx="1" transform="rotate(135)"/></g><circle r="7.300" fill="#5a7ab8"/><circle r="5.800" fill="#7a9ad0"/><circle r="3.300" fill="#f0f0f0" stroke="#3a5a98" stroke-width="0.800"/></g></svg>
<div class="a " style="left:221px;top:587px;width:64px;height:17px;overflow:hidden"><div class="a t" style="right:0;top:0">Processes (Active)</div></div>
<div class="a" style="left:291px;top:592px;width:21px;height:1px;background:repeating-linear-gradient(90deg,#555 0 1px,transparent 1px 3px)"></div>
<div class="a" style="left:292px;top:595px;width:21px;height:1px;background:repeating-linear-gradient(90deg,#555 0 1px,transparent 1px 3px)"></div>
<div class="a" style="left:291px;top:598px;width:21px;height:1px;background:repeating-linear-gradient(90deg,#555 0 1px,transparent 1px 3px)"></div>
<div class="a sb" style="left:317px;top:588px;width:16px;height:16px;background:#f0f0f0"></div>
<svg class="a" style="left:319px;top:589px" width="12" height="12"><path d="M6 1v10M1 6h10" stroke="#000" stroke-width="2"/></svg>
<div class="a sb" style="left:338px;top:588px;width:16px;height:16px;background:#f0f0f0"></div>
<svg class="a" style="left:340px;top:589px" width="12" height="12"><path d="M1.5 5.5h5v5h-5z" fill="none" stroke="#000" stroke-width="1.2"/><path d="M4.5 7.5l5.5-5.5M6 1.5h4.5v4.5" fill="none" stroke="#000" stroke-width="1.6"/></svg>
<div class="a sb" style="left:359px;top:588px;width:16px;height:16px;background:#f0f0f0"></div>
<svg class="a" style="left:361px;top:589px" width="12" height="12"><path d="M1.5 1.5l9 9M10.5 1.5l-9 9" stroke="#000" stroke-width="1.7"/></svg>
<div class="a hdr" style="left:197px;top:607px;width:15px;height:22px;"></div>
<svg class="a" style="left:199px;top:612px" width="11" height="9"><path d="M0.5 0.5h10l-5 8z" fill="#555"/><path d="M0.5 0.5h10" stroke="#222" stroke-width="1"/></svg>
<div class="a hdr" style="left:212px;top:607px;width:142px;height:22px;"></div>
<div class="a t" style="left:214px;top:611px;">Name</div>
<div class="a " style="left:197px;top:629px;width:157px;height:204px;background:#8ca3ff"></div>
<div class="a trough" style="left:358px;top:608px;width:18px;height:225px;"></div>
<div class="a sb" style="left:358px;top:608px;width:18px;height:18px;"></div>
<svg class="a" style="left:0;top:0;pointer-events:none" width="1919" height="1022"><path d="M363.0 619.0h8l-4-4z" fill="#000"/></svg>
<div class="a sb" style="left:358px;top:815px;width:18px;height:18px;"></div>
<svg class="a" style="left:0;top:0;pointer-events:none" width="1919" height="1022"><path d="M363.0 822.0h8l-4 4z" fill="#000"/></svg>
<div class="a trough" style="left:197px;top:837px;width:157px;height:18px;"></div>
<div class="a sb" style="left:197px;top:837px;width:18px;height:18px;"></div>
<svg class="a" style="left:0;top:0;pointer-events:none" width="1919" height="1022"><path d="M208.0 842.0v8l-5-4z" fill="#000"/></svg>
<div class="a sb" style="left:336px;top:837px;width:18px;height:18px;"></div>
<svg class="a" style="left:0;top:0;pointer-events:none" width="1919" height="1022"><path d="M343.0 842.0v8l5-4z" fill="#000"/></svg>
<div class="a sb" style="left:215px;top:837px;width:26px;height:18px;"></div>
<div class="a " style="left:387px;top:296px;width:1530px;height:533px;background:#f0f0f0;border-left:2px solid #fbfbfb;border-top:2px solid #fbfbfb;border-right:1px solid #a0a0a0;border-bottom:1px solid #a0a0a0"></div>
<div class="a " style="left:390px;top:298px;width:1527px;height:24px;background:#9fb9da"></div>
<div class="a " style="left:390px;top:322px;width:1527px;height:2px;background:#dfe3ea"></div>
<svg class="a" style="left:392px;top:301px" width="19" height="19" viewBox="0 0 19 19"><rect x="0.500" y="0.500" width="18" height="18" fill="#fff" stroke="#e8e8e8" stroke-width="1"/><path d="M18.500 0.500v18h-18" fill="none" stroke="#222" stroke-width="1.300"/><rect x="2" y="6" width="15" height="11" fill="#000"/><path d="M2.500 9.500h3v4h3v-4h3" fill="none" stroke="#10c030" stroke-width="1.200"/><path d="M11 11h5.500" stroke="#10c030" stroke-width="1.200"/><path d="M7.500 7v10" stroke="#10d0e0" stroke-width="1"/><path d="M9 15h7" stroke="#3a4ae0" stroke-width="1.200"/><path d="M2.500 15h4" stroke="#10c030" stroke-width="1.200"/></svg>
<div class="a t" style="left:416px;top:302px;font-size:13.8px">Wave - Default</div>
<div class="a " style="left:515px;top:305px;width:655px;height:2px;background:#d6f1fb"></div>
<div class="a " style="left:515px;top:307px;width:655px;height:1px;background:#1a1a1a"></div>
<div class="a " style="left:1170px;top:305px;width:1px;height:3px;background:#1a1a1a"></div>
<div class="a " style="left:515px;top:311px;width:655px;height:2px;background:#d6f1fb"></div>
<div class="a " style="left:515px;top:313px;width:655px;height:1px;background:#1a1a1a"></div>
<div class="a " style="left:1170px;top:311px;width:1px;height:3px;background:#1a1a1a"></div>
<div class="a " style="left:1197px;top:305px;width:655px;height:2px;background:#d6f1fb"></div>
<div class="a " style="left:1197px;top:307px;width:655px;height:1px;background:#1a1a1a"></div>
<div class="a " style="left:1852px;top:305px;width:1px;height:3px;background:#1a1a1a"></div>
<div class="a " style="left:1197px;top:311px;width:655px;height:2px;background:#d6f1fb"></div>
<div class="a " style="left:1197px;top:313px;width:655px;height:1px;background:#1a1a1a"></div>
<div class="a " style="left:1852px;top:311px;width:1px;height:3px;background:#1a1a1a"></div>
<div class="a" style="left:1172px;top:306px;width:24px;height:1px;background:repeating-linear-gradient(90deg,#234 0 1px,transparent 1px 3px)"></div>
<div class="a" style="left:1173px;top:309px;width:24px;height:1px;background:repeating-linear-gradient(90deg,#234 0 1px,transparent 1px 3px)"></div>
<div class="a" style="left:1172px;top:312px;width:24px;height:1px;background:repeating-linear-gradient(90deg,#234 0 1px,transparent 1px 3px)"></div>
<div class="a sb" style="left:1857px;top:302px;width:16px;height:16px;background:#f0f0f0"></div>
<svg class="a" style="left:1859px;top:303px" width="12" height="12"><path d="M6 1v10M1 6h10" stroke="#000" stroke-width="2"/></svg>
<div class="a sb" style="left:1877px;top:302px;width:16px;height:16px;background:#f0f0f0"></div>
<svg class="a" style="left:1879px;top:303px" width="12" height="12"><path d="M1.5 5.5h5v5h-5z" fill="none" stroke="#000" stroke-width="1.2"/><path d="M4.5 7.5l5.5-5.5M6 1.5h4.5v4.5" fill="none" stroke="#000" stroke-width="1.6"/></svg>
<div class="a sb" style="left:1898px;top:302px;width:16px;height:16px;background:#f0f0f0"></div>
<svg class="a" style="left:1900px;top:303px" width="12" height="12"><path d="M1.5 1.5l9 9M10.5 1.5l-9 9" stroke="#000" stroke-width="1.7"/></svg>
<div class="a " style="left:392px;top:324px;width:1502px;height:501px;background:#fff"></div>
<div class="a " style="left:392px;top:324px;width:198px;height:23px;background:#818181"></div>
<div class="a " style="left:594px;top:324px;width:125px;height:23px;background:#818181"></div>
<div class="a " style="left:723px;top:324px;width:1167px;height:23px;background:#000"></div>
<div class="a " style="left:1894px;top:324px;width:21px;height:23px;background:#818181"></div>
<svg class="a" style="left:405px;top:326px" width="21" height="21" viewBox="0 0 21 21"><path d="M11 12l9-6v13h-13z" fill="#30c030"/><path d="M9 18h11M10 16h10M12 14h8M14 12h6M16 10h4" stroke="#107010" stroke-width="0.800" stroke-dasharray="1 1"/><path d="M1 7.500l6-7 5 3-5 7z" fill="#b030d0"/><path d="M7 8.500l6.500 6.500-6.500 6-6.500-6z" fill="#1848f0"/><ellipse cx="12.500" cy="8" rx="4.500" ry="3.800" fill="#10e0ff"/></svg>
<svg class="a" style="left:430px;top:337px" width="8" height="5"><path d="M0.5 0.5h7l-3.5 3.5z" fill="#000"/></svg>
<div class="a t" style="left:661px;top:328px;color:#fff;width:51px;text-align:right">Msgs</div>
<div class="a " style="left:402px;top:350px;width:188px;height:88px;background:#818181"></div>
<div class="a " style="left:402px;top:459px;width:188px;height:286px;background:#818181"></div>
<div class="a " style="left:594px;top:350px;width:125px;height:88px;background:#818181"></div>
<div class="a " style="left:594px;top:459px;width:125px;height:286px;background:#818181"></div>
<div class="a " style="left:723px;top:350px;width:1167px;height:395px;background:#000"></div>
<div class="a " style="left:420px;top:364px;width:8px;height:1px;background:#c0c0c0"></div>
<svg class="a" style="left:409px;top:359px" width="13" height="13"><defs><linearGradient id="pmg" x1="0" y1="0" x2="0" y2="1"><stop offset="0.5" stop-color="#fff"/><stop offset="1" stop-color="#d4dcec"/></linearGradient></defs><rect x="0.5" y="0.5" width="11.5" height="11.5" rx="1.5" fill="url(#pmg)" stroke="#98a0b0"/><path d="M3 6.25h6.5M6.25 3v6.5" stroke="#000" stroke-width="1.3"/></svg>
<svg class="a" style="left:427px;top:354px" width="21" height="20" viewBox="0 0 21 20"><g transform="translate(2,0)"><path d="M9.500 0.500l9 9.500-9 9.500-9-9.500z" fill="#2a2ab8"/><path d="M9.500 0.500l-9 9.500 4.500 0 4.500-5z" fill="#6a96f0"/><path d="M9.500 0.500l9 9.500-4.500 0-4.500-5z" fill="#4060d0"/><path d="M0.500 10l9 9.500 0-5-4.500-4.500z" fill="#3a50d8"/><path d="M9.500 5l4.500 5-4.500 4.500-4.500-4.500z" fill="#2a68f4"/></g><path d="M0.5 12.5h3.500v-2.500l5 4.500-5 4.500v-2.500h-3.500z" fill="#36e000"/><path d="M0.5 12.5m0 2.500h3.500v1.500h-3.500zM0.5 12.5m3.500 4l0 2.500 3-2.800z" fill="#0a8a10"/><path d="M0.5 12.5h3.500v-2.500" fill="none" stroke="#e8ff60" stroke-width="0.800"/></svg>
<div class="a t" style="left:452.5px;top:355px;color:#fff;font-size:13.7px">/alu/Operand1</div>
<div class="a t" style="left:596px;top:355px;color:#fff;font-size:13.4px">0011</div>
<div class="a " style="left:420px;top:385px;width:8px;height:1px;background:#c0c0c0"></div>
<svg class="a" style="left:409px;top:380px" width="13" height="13"><defs><linearGradient id="pmg" x1="0" y1="0" x2="0" y2="1"><stop offset="0.5" stop-color="#fff"/><stop offset="1" stop-color="#d4dcec"/></linearGradient></defs><rect x="0.5" y="0.5" width="11.5" height="11.5" rx="1.5" fill="url(#pmg)" stroke="#98a0b0"/><path d="M3 6.25h6.5M6.25 3v6.5" stroke="#000" stroke-width="1.3"/></svg>
<svg class="a" style="left:427px;top:375px" width="21" height="20" viewBox="0 0 21 20"><g transform="translate(2,0)"><path d="M9.500 0.500l9 9.500-9 9.500-9-9.500z" fill="#2a2ab8"/><path d="M9.500 0.500l-9 9.500 4.500 0 4.500-5z" fill="#6a96f0"/><path d="M9.500 0.500l9 9.500-4.500 0-4.500-5z" fill="#4060d0"/><path d="M0.500 10l9 9.500 0-5-4.500-4.500z" fill="#3a50d8"/><path d="M9.500 5l4.500 5-4.500 4.500-4.500-4.500z" fill="#2a68f4"/></g><path d="M0.5 12.5h3.500v-2.500l5 4.500-5 4.500v-2.500h-3.500z" fill="#36e000"/><path d="M0.5 12.5m0 2.500h3.500v1.500h-3.500zM0.5 12.5m3.500 4l0 2.500 3-2.800z" fill="#0a8a10"/><path d="M0.5 12.5h3.500v-2.500" fill="none" stroke="#e8ff60" stroke-width="0.800"/></svg>
<div class="a t" style="left:452.5px;top:376px;color:#fff;font-size:13.7px">/alu/Operand2</div>
<div class="a t" style="left:596px;top:376px;color:#fff;font-size:13.4px">0001</div>
<div class="a " style="left:420px;top:406px;width:8px;height:1px;background:#c0c0c0"></div>
<svg class="a" style="left:409px;top:401px" width="13" height="13"><defs><linearGradient id="pmg" x1="0" y1="0" x2="0" y2="1"><stop offset="0.5" stop-color="#fff"/><stop offset="1" stop-color="#d4dcec"/></linearGradient></defs><rect x="0.5" y="0.5" width="11.5" height="11.5" rx="1.5" fill="url(#pmg)" stroke="#98a0b0"/><path d="M3 6.25h6.5M6.25 3v6.5" stroke="#000" stroke-width="1.3"/></svg>
<svg class="a" style="left:427px;top:396px" width="21" height="20" viewBox="0 0 21 20"><g transform="translate(2,0)"><path d="M9.500 0.500l9 9.500-9 9.500-9-9.500z" fill="#2a2ab8"/><path d="M9.500 0.500l-9 9.500 4.500 0 4.500-5z" fill="#6a96f0"/><path d="M9.500 0.500l9 9.500-4.500 0-4.500-5z" fill="#4060d0"/><path d="M0.500 10l9 9.500 0-5-4.500-4.500z" fill="#3a50d8"/><path d="M9.500 5l4.500 5-4.500 4.500-4.500-4.500z" fill="#2a68f4"/></g><path d="M0.5 12.5h3.500v-2.500l5 4.500-5 4.500v-2.500h-3.500z" fill="#36e000"/><path d="M0.5 12.5m0 2.500h3.500v1.500h-3.500zM0.5 12.5m3.500 4l0 2.500 3-2.800z" fill="#0a8a10"/><path d="M0.5 12.5h3.500v-2.500" fill="none" stroke="#e8ff60" stroke-width="0.800"/></svg>
<div class="a t" style="left:452.5px;top:397px;color:#fff;font-size:13.7px">/alu/Opcode</div>
<div class="a t" style="left:596px;top:397px;color:#fff;font-size:13.4px">110</div>
<div class="a " style="left:420px;top:428px;width:8px;height:1px;background:#c0c0c0"></div>
<svg class="a" style="left:409px;top:423px" width="13" height="13"><defs><linearGradient id="pmg" x1="0" y1="0" x2="0" y2="1"><stop offset="0.5" stop-color="#fff"/><stop offset="1" stop-color="#d4dcec"/></linearGradient></defs><rect x="0.5" y="0.5" width="11.5" height="11.5" rx="1.5" fill="url(#pmg)" stroke="#98a0b0"/><path d="M3 6.25h6.5M6.25 3v6.5" stroke="#000" stroke-width="1.3"/></svg>
<svg class="a" style="left:426px;top:418px" width="23" height="21" viewBox="0 0 23 21"><path d="M9.500 0.500l9 9.500-9 9.500-9-9.500z" fill="#2a2ab8"/><path d="M9.500 0.500l-9 9.500 4.500 0 4.500-5z" fill="#6a96f0"/><path d="M9.500 0.500l9 9.500-4.500 0-4.500-5z" fill="#4060d0"/><path d="M0.500 10l9 9.500 0-5-4.500-4.500z" fill="#3a50d8"/><path d="M9.500 5l4.500 5-4.500 4.500-4.500-4.500z" fill="#2a68f4"/><path d="M12 14h3.500v-2.500l5 4.500-5 4.500v-2.500h-3.500z" fill="#36e000"/><path d="M12 14m0 2.500h3.500v1.500h-3.500zM12 14m3.500 4l0 2.500 3-2.800z" fill="#0a8a10"/><path d="M12 14h3.500v-2.500" fill="none" stroke="#e8ff60" stroke-width="0.800"/></svg>
<div class="a t" style="left:452.5px;top:419px;color:#fff;font-size:13.7px">/alu/Result</div>
<div class="a t" style="left:596px;top:419px;color:#fff;font-size:13.4px">00000000</div>
<div class="a " style="left:420px;top:449px;width:8px;height:1px;background:#808080"></div>
<svg class="a" style="left:409px;top:444px" width="13" height="13"><defs><linearGradient id="pmg" x1="0" y1="0" x2="0" y2="1"><stop offset="0.5" stop-color="#fff"/><stop offset="1" stop-color="#d4dcec"/></linearGradient></defs><rect x="0.5" y="0.5" width="11.5" height="11.5" rx="1.5" fill="url(#pmg)" stroke="#98a0b0"/><path d="M3 6.25h6.5M6.25 3v6.5" stroke="#000" stroke-width="1.3"/></svg>
<svg class="a" style="left:428px;top:439px" width="19" height="20" viewBox="0 0 19 20"><path d="M9.500 0.500l9 9.500-9 9.500-9-9.500z" fill="#2a2ab8"/><path d="M9.500 0.500l-9 9.500 4.500 0 4.500-5z" fill="#6a96f0"/><path d="M9.500 0.500l9 9.500-4.500 0-4.500-5z" fill="#4060d0"/><path d="M0.500 10l9 9.500 0-5-4.500-4.500z" fill="#3a50d8"/><path d="M9.500 5l4.500 5-4.500 4.500-4.500-4.500z" fill="#2a68f4"/></svg>
<div class="a t" style="left:452.5px;top:440px;color:#000;font-size:13.7px">/alu/adder_B_input</div>
<div class="a t" style="left:596px;top:440px;color:#000;font-size:13.4px">0001</div>
<svg class="a" style="left:428px;top:460px" width="19" height="20" viewBox="0 0 19 20"><path d="M9.500 0.500l9 9.500-9 9.500-9-9.500z" fill="#2a2ab8"/><path d="M9.500 0.500l-9 9.500 4.500 0 4.500-5z" fill="#6a96f0"/><path d="M9.500 0.500l9 9.500-4.500 0-4.500-5z" fill="#4060d0"/><path d="M0.500 10l9 9.500 0-5-4.500-4.500z" fill="#3a50d8"/><path d="M9.500 5l4.500 5-4.500 4.500-4.500-4.500z" fill="#2a68f4"/></svg>
<div class="a t" style="left:452.5px;top:461px;color:#fff;font-size:13.7px">/alu/adder_cin</div>
<div class="a t" style="left:596px;top:461px;color:#fff;font-size:13.4px">0</div>
<div class="a " style="left:420px;top:491px;width:8px;height:1px;background:#c0c0c0"></div>
<svg class="a" style="left:409px;top:486px" width="13" height="13"><defs><linearGradient id="pmg" x1="0" y1="0" x2="0" y2="1"><stop offset="0.5" stop-color="#fff"/><stop offset="1" stop-color="#d4dcec"/></linearGradient></defs><rect x="0.5" y="0.5" width="11.5" height="11.5" rx="1.5" fill="url(#pmg)" stroke="#98a0b0"/><path d="M3 6.25h6.5M6.25 3v6.5" stroke="#000" stroke-width="1.3"/></svg>
<svg class="a" style="left:428px;top:481px" width="19" height="20" viewBox="0 0 19 20"><path d="M9.500 0.500l9 9.500-9 9.500-9-9.500z" fill="#2a2ab8"/><path d="M9.500 0.500l-9 9.500 4.500 0 4.500-5z" fill="#6a96f0"/><path d="M9.500 0.500l9 9.500-4.500 0-4.500-5z" fill="#4060d0"/><path d="M0.500 10l9 9.500 0-5-4.500-4.500z" fill="#3a50d8"/><path d="M9.500 5l4.500 5-4.500 4.500-4.500-4.500z" fill="#2a68f4"/></svg>
<div class="a t" style="left:452.5px;top:482px;color:#fff;font-size:13.7px">/alu/sub_sum</div>
<div class="a t" style="left:596px;top:482px;color:#fff;font-size:13.4px">0100</div>
<svg class="a" style="left:428px;top:502px" width="19" height="20" viewBox="0 0 19 20"><path d="M9.500 0.500l9 9.500-9 9.500-9-9.500z" fill="#2a2ab8"/><path d="M9.500 0.500l-9 9.500 4.500 0 4.500-5z" fill="#6a96f0"/><path d="M9.500 0.500l9 9.500-4.500 0-4.500-5z" fill="#4060d0"/><path d="M0.500 10l9 9.500 0-5-4.500-4.500z" fill="#3a50d8"/><path d="M9.500 5l4.500 5-4.500 4.500-4.500-4.500z" fill="#2a68f4"/></svg>
<div class="a t" style="left:452.5px;top:503px;color:#fff;font-size:13.7px">/alu/adder_cout</div>
<div class="a t" style="left:596px;top:503px;color:#fff;font-size:13.4px">0</div>
<div class="a " style="left:420px;top:533px;width:8px;height:1px;background:#c0c0c0"></div>
<svg class="a" style="left:409px;top:528px" width="13" height="13"><defs><linearGradient id="pmg" x1="0" y1="0" x2="0" y2="1"><stop offset="0.5" stop-color="#fff"/><stop offset="1" stop-color="#d4dcec"/></linearGradient></defs><rect x="0.5" y="0.5" width="11.5" height="11.5" rx="1.5" fill="url(#pmg)" stroke="#98a0b0"/><path d="M3 6.25h6.5M6.25 3v6.5" stroke="#000" stroke-width="1.3"/></svg>
<svg class="a" style="left:428px;top:523px" width="19" height="20" viewBox="0 0 19 20"><path d="M9.500 0.500l9 9.500-9 9.500-9-9.500z" fill="#2a2ab8"/><path d="M9.500 0.500l-9 9.500 4.500 0 4.500-5z" fill="#6a96f0"/><path d="M9.500 0.500l9 9.500-4.500 0-4.500-5z" fill="#4060d0"/><path d="M0.500 10l9 9.500 0-5-4.500-4.500z" fill="#3a50d8"/><path d="M9.500 5l4.500 5-4.500 4.500-4.500-4.500z" fill="#2a68f4"/></svg>
<div class="a t" style="left:452.5px;top:524px;color:#fff;font-size:13.7px">/alu/mult_result</div>
<div class="a t" style="left:596px;top:524px;color:#fff;font-size:13.4px">00000011</div>
<svg class="a" style="left:428px;top:545px" width="19" height="20" viewBox="0 0 19 20"><path d="M9.500 0.500l9 9.500-9 9.500-9-9.500z" fill="#2a2ab8"/><path d="M9.500 0.500l-9 9.500 4.500 0 4.500-5z" fill="#6a96f0"/><path d="M9.500 0.500l9 9.500-4.500 0-4.500-5z" fill="#4060d0"/><path d="M0.500 10l9 9.500 0-5-4.500-4.500z" fill="#3a50d8"/><path d="M9.500 5l4.500 5-4.500 4.500-4.500-4.500z" fill="#2a68f4"/></svg>
<div class="a t" style="left:452.5px;top:546px;color:#fff;font-size:13.7px">/alu/gt_result</div>
<div class="a t" style="left:596px;top:546px;color:#fff;font-size:13.4px">1</div>
<svg class="a" style="left:428px;top:566px" width="19" height="20" viewBox="0 0 19 20"><path d="M9.500 0.500l9 9.500-9 9.500-9-9.500z" fill="#2a2ab8"/><path d="M9.500 0.500l-9 9.500 4.500 0 4.500-5z" fill="#6a96f0"/><path d="M9.500 0.500l9 9.500-4.500 0-4.500-5z" fill="#4060d0"/><path d="M0.500 10l9 9.500 0-5-4.500-4.500z" fill="#3a50d8"/><path d="M9.500 5l4.500 5-4.500 4.500-4.500-4.500z" fill="#2a68f4"/></svg>
<div class="a t" style="left:452.5px;top:567px;color:#fff;font-size:13.7px">/alu/lt_result</div>
<div class="a t" style="left:596px;top:567px;color:#fff;font-size:13.4px">0</div>
<div class="a " style="left:408px;top:587px;width:178px;height:1px;background:#222"></div>
<div class="a " style="left:597px;top:587px;width:117px;height:1px;background:#222"></div>
<svg class="a" style="left:404px;top:582px" width="6" height="10"><path d="M0.5 0.5v8l4-4z" fill="none" stroke="#222"/></svg>
<svg class="a" style="left:723px;top:323px" width="1167" height="475" viewBox="723 323 1167 475"><path d="M730.9 355.75Q727.9 355.75 727.9 358.75V367.55Q727.9 370.55 730.9 370.55M730.9 355.75H1654.0M730.9 370.55H1654.0" fill="none" stroke="#92d292" stroke-width="1.45"/><path d="M730.9 377.0Q727.9 377.0 727.9 380.0V388.8Q727.9 391.8 730.9 391.8M730.9 377.0H1654.0M730.9 391.8H1654.0" fill="none" stroke="#92d292" stroke-width="1.45"/><path d="M730.9 398.25Q727.9 398.25 727.9 401.25V410.05Q727.9 413.05 730.9 413.05M730.9 398.25H840.4M730.9 413.05H840.4M843.6 398.25H956.4M843.6 413.05H956.4M840.4 398.25L843.6 413.05M840.4 413.05L843.6 398.25M959.6 398.25H1072.4M959.6 413.05H1072.4M956.4 398.25L959.6 413.05M956.4 413.05L959.6 398.25M1075.6 398.25H1188.4M1075.6 413.05H1188.4M1072.4 398.25L1075.6 413.05M1072.4 413.05L1075.6 398.25M1191.6 398.25H1304.4M1191.6 413.05H1304.4M1188.4 398.25L1191.6 413.05M1188.4 413.05L1191.6 398.25M1307.6 398.25H1420.4M1307.6 413.05H1420.4M1304.4 398.25L1307.6 413.05M1304.4 413.05L1307.6 398.25M1423.6 398.25H1536.4M1423.6 413.05H1536.4M1420.4 398.25L1423.6 413.05M1420.4 413.05L1423.6 398.25M1539.6 398.25H1654.0M1539.6 413.05H1654.0M1536.4 398.25L1539.6 413.05M1536.4 413.05L1539.6 398.25" fill="none" stroke="#92d292" stroke-width="1.45"/><path d="M730.9 419.25Q727.9 419.25 727.9 422.25V431.05Q727.9 434.05 730.9 434.05M730.9 419.25H840.4M730.9 434.05H840.4M843.6 419.25H956.4M843.6 434.05H956.4M840.4 419.25L843.6 434.05M840.4 434.05L843.6 419.25M959.6 419.25H1072.4M959.6 434.05H1072.4M956.4 419.25L959.6 434.05M956.4 434.05L959.6 419.25M1075.6 419.25H1188.4M1075.6 434.05H1188.4M1072.4 419.25L1075.6 434.05M1072.4 434.05L1075.6 419.25M1191.6 419.25H1654.0M1191.6 434.05H1654.0M1188.4 419.25L1191.6 434.05M1188.4 434.05L1191.6 419.25" fill="none" stroke="#92d292" stroke-width="1.45"/><path d="M730.9 440.5Q727.9 440.5 727.9 443.5V452.3Q727.9 455.3 730.9 455.3M730.9 440.5H840.4M730.9 455.3H840.4M843.6 440.5H956.4M843.6 455.3H956.4M840.4 440.5L843.6 455.3M840.4 455.3L843.6 440.5M959.6 440.5H1072.4M959.6 455.3H1072.4M956.4 440.5L959.6 455.3M956.4 455.3L959.6 440.5M1075.6 440.5H1188.4M1075.6 455.3H1188.4M1072.4 440.5L1075.6 455.3M1072.4 455.3L1075.6 440.5M1191.6 440.5H1304.4M1191.6 455.3H1304.4M1188.4 440.5L1191.6 455.3M1188.4 455.3L1191.6 440.5M1307.6 440.5H1536.4M1307.6 455.3H1536.4M1304.4 440.5L1307.6 455.3M1304.4 455.3L1307.6 440.5M1539.6 440.5H1654.0M1539.6 455.3H1654.0M1536.4 440.5L1539.6 455.3M1536.4 455.3L1539.6 440.5" fill="none" stroke="#92d292" stroke-width="1.45"/><path d="M726.7 473.0V477.0H841.7V462.0H957.7V477.0H1073.7V462.0H1189.7V477.0H1305.7V462.0H1537.7V477.0H1653.7" fill="none" stroke="#00d400" stroke-width="1.7"/><path d="M730.9 482.75Q727.9 482.75 727.9 485.75V494.55Q727.9 497.55 730.9 497.55M730.9 482.75H840.4M730.9 497.55H840.4M843.6 482.75H956.4M843.6 497.55H956.4M840.4 482.75L843.6 497.55M840.4 497.55L843.6 482.75M959.6 482.75H1072.4M959.6 497.55H1072.4M956.4 482.75L959.6 497.55M956.4 497.55L959.6 482.75M1075.6 482.75H1188.4M1075.6 497.55H1188.4M1072.4 482.75L1075.6 497.55M1072.4 497.55L1075.6 482.75M1191.6 482.75H1304.4M1191.6 497.55H1304.4M1188.4 482.75L1191.6 497.55M1188.4 497.55L1191.6 482.75M1307.6 482.75H1536.4M1307.6 497.55H1536.4M1304.4 482.75L1307.6 497.55M1304.4 497.55L1307.6 482.75M1539.6 482.75H1654.0M1539.6 497.55H1654.0M1536.4 482.75L1539.6 497.55M1536.4 497.55L1539.6 482.75" fill="none" stroke="#92d292" stroke-width="1.45"/><path d="M726.7 515.25V519.25H841.7V504.25H957.7V519.25H1073.7V504.25H1189.7V519.25H1305.7V504.25H1537.7V519.25H1653.7" fill="none" stroke="#00d400" stroke-width="1.7"/><path d="M730.9 525.25Q727.9 525.25 727.9 528.25V537.05Q727.9 540.05 730.9 540.05M730.9 525.25H1654.0M730.9 540.05H1654.0" fill="none" stroke="#92d292" stroke-width="1.45"/><path d="M726.7 550.75V546.75H1653.7" fill="none" stroke="#00d400" stroke-width="1.7"/><path d="M726.7 578.75V582.75H1653.7" fill="none" stroke="#00d400" stroke-width="1.7"/><path d="M784 350v395" stroke="#8c8c8c" stroke-width="1.1"/><path d="M842 350v395" stroke="#8c8c8c" stroke-width="1.1"/><path d="M900 350v395" stroke="#8c8c8c" stroke-width="1.1"/><path d="M958 350v395" stroke="#8c8c8c" stroke-width="1.1"/><path d="M1016 350v395" stroke="#8c8c8c" stroke-width="1.1"/><path d="M1074 350v395" stroke="#8c8c8c" stroke-width="1.1"/><path d="M1132 350v395" stroke="#8c8c8c" stroke-width="1.1"/><path d="M1190 350v395" stroke="#8c8c8c" stroke-width="1.1"/><path d="M1248 350v395" stroke="#8c8c8c" stroke-width="1.1"/><path d="M1306 350v395" stroke="#8c8c8c" stroke-width="1.1"/><path d="M1364 350v395" stroke="#8c8c8c" stroke-width="1.1"/><path d="M1422 350v395" stroke="#8c8c8c" stroke-width="1.1"/><path d="M1480 350v395" stroke="#8c8c8c" stroke-width="1.1"/><path d="M1538 350v395" stroke="#8c8c8c" stroke-width="1.1"/><path d="M1596 350v395" stroke="#8c8c8c" stroke-width="1.1"/><path d="M1654 350v395" stroke="#8c8c8c" stroke-width="1.1"/><path d="M1712 350v395" stroke="#8c8c8c" stroke-width="1.1"/><path d="M1770 350v395" stroke="#8c8c8c" stroke-width="1.1"/><path d="M1828 350v395" stroke="#8c8c8c" stroke-width="1.1"/><text x="731.0" y="368.35" fill="#fff" font-size="13.6">0011</text><text x="731.0" y="389.6" fill="#fff" font-size="13.6">0001</text><text x="731.0" y="410.85" fill="#fff" font-size="13.6">000</text><text x="847.0" y="410.85" fill="#fff" font-size="13.6">001</text><text x="963.0" y="410.85" fill="#fff" font-size="13.6">010</text><text x="1079.0" y="410.85" fill="#fff" font-size="13.6">011</text><text x="1195.0" y="410.85" fill="#fff" font-size="13.6">100</text><text x="1311.0" y="410.85" fill="#fff" font-size="13.6">111</text><text x="1427.0" y="410.85" fill="#fff" font-size="13.6">101</text><text x="1543.0" y="410.85" fill="#fff" font-size="13.6">110</text><text x="731.0" y="431.85" fill="#fff" font-size="13.6">00000100</text><text x="847.0" y="431.85" fill="#fff" font-size="13.6">00000010</text><text x="963.0" y="431.85" fill="#fff" font-size="13.6">00000011</text><text x="1079.0" y="431.85" fill="#fff" font-size="13.6">11111111</text><text x="1195.0" y="431.85" fill="#fff" font-size="13.6">00000000</text><text x="731.0" y="453.1" fill="#fff" font-size="13.6">0001</text><text x="847.0" y="453.1" fill="#fff" font-size="13.6">1110</text><text x="963.0" y="453.1" fill="#fff" font-size="13.6">0001</text><text x="1079.0" y="453.1" fill="#fff" font-size="13.6">1110</text><text x="1195.0" y="453.1" fill="#fff" font-size="13.6">0001</text><text x="1311.0" y="453.1" fill="#fff" font-size="13.6">1110</text><text x="1543.0" y="453.1" fill="#fff" font-size="13.6">0001</text><text x="731.0" y="495.35" fill="#fff" font-size="13.6">0100</text><text x="847.0" y="495.35" fill="#fff" font-size="13.6">0010</text><text x="963.0" y="495.35" fill="#fff" font-size="13.6">0100</text><text x="1079.0" y="495.35" fill="#fff" font-size="13.6">0010</text><text x="1195.0" y="495.35" fill="#fff" font-size="13.6">0100</text><text x="1311.0" y="495.35" fill="#fff" font-size="13.6">0010</text><text x="1543.0" y="495.35" fill="#fff" font-size="13.6">0100</text><text x="731.0" y="537.85" fill="#fff" font-size="13.6">00000011</text><rect x="723" y="346.7" width="1167" height="3.6" fill="#fff"/><rect x="723" y="745" width="1167" height="3.5" fill="#fff"/><rect x="1551" y="324" width="3.8" height="23" fill="#ffc800"/><rect x="1551" y="350.5" width="3.8" height="394.5" fill="#ffc800"/><rect x="1551" y="748.5" width="3.8" height="28" fill="#ffc800"/><rect x="723" y="748.5" width="1167" height="49" fill="#000"/><path d="M732.5 752.5v4.5M738.0 752.5v4.5M744.0 752.5v4.5M749.5 752.5v4.5M755.5 752.5v4.5M761.5 752.5v4.5M767.0 752.5v4.5M773.0 752.5v4.5M778.5 752.5v4.5M784.5 749v9.5M790.5 752.5v4.5M796.0 752.5v4.5M802.0 752.5v4.5M807.5 752.5v4.5M813.5 752.5v4.5M819.5 752.5v4.5M825.0 752.5v4.5M831.0 752.5v4.5M836.5 752.5v4.5M842.5 749v9.5M848.5 752.5v4.5M854.0 752.5v4.5M860.0 752.5v4.5M865.5 752.5v4.5M871.5 752.5v4.5M877.5 752.5v4.5M883.0 752.5v4.5M889.0 752.5v4.5M894.5 752.5v4.5M900.5 749v9.5M906.5 752.5v4.5M912.0 752.5v4.5M918.0 752.5v4.5M923.5 752.5v4.5M929.5 752.5v4.5M935.5 752.5v4.5M941.0 752.5v4.5M947.0 752.5v4.5M952.5 752.5v4.5M958.5 749v9.5M964.5 752.5v4.5M970.0 752.5v4.5M976.0 752.5v4.5M981.5 752.5v4.5M987.5 752.5v4.5M993.5 752.5v4.5M999.0 752.5v4.5M1005.0 752.5v4.5M1010.5 752.5v4.5M1016.5 749v9.5M1022.5 752.5v4.5M1028.0 752.5v4.5M1034.0 752.5v4.5M1039.5 752.5v4.5M1045.5 752.5v4.5M1051.5 752.5v4.5M1057.0 752.5v4.5M1063.0 752.5v4.5M1068.5 752.5v4.5M1074.5 749v9.5M1080.5 752.5v4.5M1086.0 752.5v4.5M1092.0 752.5v4.5M1097.5 752.5v4.5M1103.5 752.5v4.5M1109.5 752.5v4.5M1115.0 752.5v4.5M1121.0 752.5v4.5M1126.5 752.5v4.5M1132.5 749v9.5M1138.5 752.5v4.5M1144.0 752.5v4.5M1150.0 752.5v4.5M1155.5 752.5v4.5M1161.5 752.5v4.5M1167.5 752.5v4.5M1173.0 752.5v4.5M1179.0 752.5v4.5M1184.5 752.5v4.5M1190.5 749v9.5M1196.5 752.5v4.5M1202.0 752.5v4.5M1208.0 752.5v4.5M1213.5 752.5v4.5M1219.5 752.5v4.5M1225.5 752.5v4.5M1231.0 752.5v4.5M1237.0 752.5v4.5M1242.5 752.5v4.5M1248.5 749v9.5M1254.5 752.5v4.5M1260.0 752.5v4.5M1266.0 752.5v4.5M1271.5 752.5v4.5M1277.5 752.5v4.5M1283.5 752.5v4.5M1289.0 752.5v4.5M1295.0 752.5v4.5M1300.5 752.5v4.5M1306.5 749v9.5M1312.5 752.5v4.5M1318.0 752.5v4.5M1324.0 752.5v4.5M1329.5 752.5v4.5M1335.5 752.5v4.5M1341.5 752.5v4.5M1347.0 752.5v4.5M1353.0 752.5v4.5M1358.5 752.5v4.5M1364.5 749v9.5M1370.5 752.5v4.5M1376.0 752.5v4.5M1382.0 752.5v4.5M1387.5 752.5v4.5M1393.5 752.5v4.5M1399.5 752.5v4.5M1405.0 752.5v4.5M1411.0 752.5v4.5M1416.5 752.5v4.5M1422.5 749v9.5M1428.5 752.5v4.5M1434.0 752.5v4.5M1440.0 752.5v4.5M1445.5 752.5v4.5M1451.5 752.5v4.5M1457.5 752.5v4.5M1463.0 752.5v4.5M1469.0 752.5v4.5M1474.5 752.5v4.5M1480.5 749v9.5M1486.5 752.5v4.5M1492.0 752.5v4.5M1498.0 752.5v4.5M1503.5 752.5v4.5M1509.5 752.5v4.5M1515.5 752.5v4.5M1521.0 752.5v4.5M1527.0 752.5v4.5M1532.5 752.5v4.5M1538.5 749v9.5M1544.5 752.5v4.5M1550.0 752.5v4.5M1556.0 752.5v4.5M1561.5 752.5v4.5M1567.5 752.5v4.5M1573.5 752.5v4.5M1579.0 752.5v4.5M1585.0 752.5v4.5M1590.5 752.5v4.5M1596.5 749v9.5M1602.5 752.5v4.5M1608.0 752.5v4.5M1614.0 752.5v4.5M1619.5 752.5v4.5M1625.5 752.5v4.5M1631.5 752.5v4.5M1637.0 752.5v4.5M1643.0 752.5v4.5M1648.5 752.5v4.5M1654.5 749v9.5M1660.5 752.5v4.5M1666.0 752.5v4.5M1672.0 752.5v4.5M1677.5 752.5v4.5M1683.5 752.5v4.5M1689.5 752.5v4.5M1695.0 752.5v4.5M1701.0 752.5v4.5M1706.5 752.5v4.5M1712.5 749v9.5M1718.5 752.5v4.5M1724.0 752.5v4.5M1730.0 752.5v4.5M1735.5 752.5v4.5M1741.5 752.5v4.5M1747.5 752.5v4.5M1753.0 752.5v4.5M1759.0 752.5v4.5M1764.5 752.5v4.5M1770.5 749v9.5M1776.5 752.5v4.5M1782.0 752.5v4.5M1788.0 752.5v4.5M1793.5 752.5v4.5M1799.5 752.5v4.5M1805.5 752.5v4.5M1811.0 752.5v4.5M1817.0 752.5v4.5M1822.5 752.5v4.5M1828.5 749v9.5M1834.5 752.5v4.5M1840.0 752.5v4.5M1846.0 752.5v4.5M1851.5 752.5v4.5M1857.5 752.5v4.5M1863.5 752.5v4.5M1869.0 752.5v4.5M1875.0 752.5v4.5M1880.5 752.5v4.5" stroke="#00e000" stroke-width="1.4"/><rect x="726" y="776.5" width="1160" height="1.2" fill="#7a7a7a"/><rect x="1551" y="748.5" width="3.8" height="28" fill="#ffc800"/><text x="841.0" y="774" fill="#00e000" font-size="13" text-anchor="middle">100 ps</text><text x="957.0" y="774" fill="#00e000" font-size="13" text-anchor="middle">200 ps</text><text x="1073.0" y="774" fill="#00e000" font-size="13" text-anchor="middle">300 ps</text><text x="1189.0" y="774" fill="#00e000" font-size="13" text-anchor="middle">400 ps</text><text x="1305.0" y="774" fill="#00e000" font-size="13" text-anchor="middle">500 ps</text><text x="1421.0" y="774" fill="#00e000" font-size="13" text-anchor="middle">600 ps</text><text x="1537.0" y="774" fill="#00e000" font-size="13" text-anchor="middle">700 ps</text><text x="1653.0" y="774" fill="#00e000" font-size="13" text-anchor="middle">800 ps</text><text x="1769.0" y="774" fill="#00e000" font-size="13" text-anchor="middle">900 ps</text><svg x="727" y="760" width="11" height="16" viewBox="0 0 11 16"><text x="10.5" y="14" fill="#00e000" font-size="13.5" text-anchor="end">0 ps</text></svg><svg x="1860" y="760" width="26" height="16" viewBox="0 0 26 16"><text x="3" y="14" fill="#00e000" font-size="13.5">1000 ps</text></svg><rect x="1530.5" y="778.5" width="45" height="18.5" fill="#000" stroke="#f0b400" stroke-width="1.2"/><text x="1553" y="793" fill="#f0c030" font-size="13.5" text-anchor="middle">713 ps</text></svg>
<div class="a " style="left:392px;top:749px;width:198px;height:49px;background:#818181"></div>
<div class="a " style="left:594px;top:749px;width:125px;height:27px;background:#818181"></div>
<div class="a " style="left:452px;top:776px;width:138px;height:22px;background:#fff"></div>
<div class="a " style="left:594px;top:776px;width:125px;height:22px;background:#fff"></div>
<svg class="a" style="left:402px;top:756px" width="15" height="13" viewBox="0 0 15 13"><path d="M2 9l3-6 2 3 2-4 3 7z" fill="#b8b8b8"/><path d="M1 10.500h12" stroke="#4a7ae0" stroke-width="1.500"/><path d="M1 10.500l2.500-2v4zM13.500 10.500l-2.500-2v4z" fill="#4a7ae0"/></svg>
<svg class="a" style="left:417px;top:755px" width="15" height="14" viewBox="0 0 15 14"><rect x="0.500" y="1" width="13" height="10" fill="#5a8ad8" stroke="#c8d8f0" stroke-width="1"/><path d="M2.500 4h9M2.500 6.500h7M2.500 9h8" stroke="#e8f0ff" stroke-width="1" stroke-dasharray="2 1"/><path d="M9 9.500l4 3" stroke="#d8d8d8" stroke-width="1.600"/></svg>
<svg class="a" style="left:432px;top:755px" width="14" height="14" viewBox="0 0 14 14"><circle cx="7" cy="7" r="6.300" fill="#58b858" stroke="#a8e0a8" stroke-width="1"/><path d="M7 3.800v6.400M3.800 7h6.400" stroke="#fff" stroke-width="1.900"/></svg>
<svg class="a" style="left:406px;top:781px" width="14" height="15" viewBox="0 0 14 15"><path d="M3.500 7v-2.500c0-4 7-4 7 0v1" fill="none" stroke="#909090" stroke-width="1.500"/><rect x="1" y="7" width="12" height="7.500" fill="#f0c040" stroke="#b07800" stroke-width="0.900"/><path d="M2.500 9h9M2.500 11h9M2.500 13h9" stroke="#fff0a0" stroke-width="0.800" stroke-dasharray="1.500 1"/></svg>
<svg class="a" style="left:422px;top:780px" width="14" height="14" viewBox="0 0 14 14"><path d="M1.500 12.500l7-7" stroke="#5a8ae0" stroke-width="3" stroke-linecap="round"/><path d="M8 5l2-3.500 2 0-1 2 1.500 1.500 2-1 0 2-3 2.500z" fill="#7aa0e8"/></svg>
<svg class="a" style="left:438px;top:780px" width="14" height="14" viewBox="0 0 14 14"><circle cx="7" cy="7" r="6.200" fill="#e85838" stroke="#f8b0a0" stroke-width="0.800"/><rect x="3" y="5.500" width="8" height="3" rx="0.500" fill="#fff"/></svg>
<div class="a t" style="left:500px;top:754px;color:#fff;width:78px;text-align:right;font-size:13.4px">Now</div>
<div class="a t" style="left:620px;top:754px;color:#fff;width:87px;text-align:right;font-size:13.4px">800 ps</div>
<div class="a t" style="left:500px;top:779px;width:78px;text-align:right;font-size:13.4px">Cursor 1</div>
<div class="a t" style="left:620px;top:779px;width:87px;text-align:right;font-size:13.4px">713 ps</div>
<div class="a " style="left:392px;top:801px;width:198px;height:24px;background:#818181"></div>
<div class="a " style="left:594px;top:801px;width:124px;height:24px;#f0f0f0"></div>
<div class="a trough" style="left:402px;top:803px;width:188px;height:20px;"></div>
<div class="a sb" style="left:402px;top:803px;width:20px;height:20px;"></div>
<svg class="a" style="left:0;top:0;pointer-events:none" width="1919" height="1022"><path d="M414.0 809.0v8l-5-4z" fill="#909090"/></svg>
<div class="a sb" style="left:570px;top:803px;width:20px;height:20px;"></div>
<svg class="a" style="left:0;top:0;pointer-events:none" width="1919" height="1022"><path d="M578.0 809.0v8l5-4z" fill="#909090"/></svg>
<div class="a trough" style="left:594px;top:803px;width:125px;height:20px;"></div>
<div class="a sb" style="left:594px;top:803px;width:20px;height:20px;"></div>
<svg class="a" style="left:0;top:0;pointer-events:none" width="1919" height="1022"><path d="M606.0 809.0v8l-5-4z" fill="#000"/></svg>
<div class="a sb" style="left:699px;top:803px;width:20px;height:20px;"></div>
<svg class="a" style="left:0;top:0;pointer-events:none" width="1919" height="1022"><path d="M707.0 809.0v8l5-4z" fill="#000"/></svg>
<div class="a trough" style="left:724px;top:803px;width:1164px;height:20px;"></div>
<div class="a sb" style="left:724px;top:803px;width:20px;height:20px;"></div>
<svg class="a" style="left:0;top:0;pointer-events:none" width="1919" height="1022"><path d="M736.0 809.0v8l-5-4z" fill="#000"/></svg>
<div class="a sb" style="left:1868px;top:803px;width:20px;height:20px;"></div>
<svg class="a" style="left:0;top:0;pointer-events:none" width="1919" height="1022"><path d="M1876.0 809.0v8l5-4z" fill="#000"/></svg>
<div class="a sb" style="left:743px;top:803px;width:1126px;height:20px;"></div>
<div class="a " style="left:1546px;top:805px;width:1px;height:15px;background:#ffd000"></div>
<div class="a trough" style="left:1895px;top:352px;width:17px;height:391px;"></div>
<div class="a sb" style="left:1895px;top:352px;width:17px;height:17px;"></div>
<svg class="a" style="left:0;top:0;pointer-events:none" width="1919" height="1022"><path d="M1899.5 362.5h8l-4-4z" fill="#000"/></svg>
<div class="a sb" style="left:1895px;top:726px;width:17px;height:17px;"></div>
<svg class="a" style="left:0;top:0;pointer-events:none" width="1919" height="1022"><path d="M1899.5 732.5h8l-4 4z" fill="#000"/></svg>
<div class="a sb" style="left:1895px;top:370px;width:17px;height:355px;"></div>
<div class="a " style="left:1896px;top:450px;width:15px;height:19px;background:#fbfbfb"></div>
<div class="a " style="left:1894px;top:749px;width:21px;height:49px;background:#818181"></div>
<div class="a " style="left:1894px;top:801px;width:21px;height:24px;background:#818181"></div>
<div class="a " style="left:389px;top:827px;width:1528px;height:1px;background:#c4c4c4"></div>
<div class="a " style="left:478px;top:830px;width:1414px;height:2px;background:#3c3c3c"></div>
<div class="a " style="left:387px;top:832px;width:91px;height:26px;background:#f0f0f0;border:1px solid #3a3a3a;border-width:0 1px 2px 2px;border-radius:0 0 5px 5px"></div>
<div class="a " style="left:389px;top:829px;width:88px;height:4px;background:#f0f0f0"></div>
<svg class="a" style="left:395px;top:834px" width="19" height="19" viewBox="0 0 19 19"><rect x="0.500" y="0.500" width="18" height="18" fill="#fff" stroke="#e8e8e8" stroke-width="1"/><path d="M18.500 0.500v18h-18" fill="none" stroke="#222" stroke-width="1.300"/><rect x="2" y="6" width="15" height="11" fill="#000"/><path d="M2.500 9.500h3v4h3v-4h3" fill="none" stroke="#10c030" stroke-width="1.200"/><path d="M11 11h5.500" stroke="#10c030" stroke-width="1.200"/><path d="M7.500 7v10" stroke="#10d0e0" stroke-width="1"/><path d="M9 15h7" stroke="#3a4ae0" stroke-width="1.200"/><path d="M2.500 15h4" stroke="#10c030" stroke-width="1.200"/></svg>
<div class="a t" style="left:418.5px;top:835px;">Wave</div>
<div class="a t" style="left:461px;top:834px;color:#b4b4b4;font-size:18px;font-weight:bold">&#215;</div>
<div class="a " style="left:478px;top:832px;width:107px;height:26px;background:#c8c8c8;border:1px solid #333;border-width:0 2px 2px 1px;border-radius:0 0 5px 5px"></div>
<svg class="a" style="left:485px;top:839px" width="18" height="8" viewBox="0 0 18 8"><rect x="0.500" y="2" width="17" height="3.500" rx="1" fill="#222"/><rect x="1" y="5" width="16" height="1.500" fill="#888"/><rect x="2.500" y="3" width="2.500" height="1.200" fill="#30c050"/></svg>
<div class="a t" style="left:509px;top:835px;">ALU.vhd</div>
<div class="a t" style="left:568px;top:834px;color:#a4a4a4;font-size:18px;font-weight:bold">&#215;</div>
<div class="a sb" style="left:1893px;top:834px;width:13px;height:17px;"></div>
<svg class="a" style="left:0;top:0;pointer-events:none" width="1919" height="1022"><path d="M1901.5 838.5v8l-5-4z" fill="#888"/></svg>
<div class="a sb" style="left:1906px;top:834px;width:13px;height:17px;"></div>
<svg class="a" style="left:0;top:0;pointer-events:none" width="1919" height="1022"><path d="M1910.5 838.5v8l5-4z" fill="#888"/></svg>
<div class="a " style="left:0px;top:867px;width:1919px;height:24px;background:#f0f0f0"></div>
<svg class="a" style="left:4px;top:869px" width="18" height="20" viewBox="0 0 18 20"><path d="M1 19v-13.500c0-3 2-4.500 4.500-4.500h7c2.500 0 4.500 1.500 4.500 4.500v13.500l-3.500-2v-9h-9v9z" fill="#7c7c7c" stroke="#3a3a3a" stroke-width="0.900"/><path d="M4.500 8h9v7h-9z" fill="#fafafa"/><path d="M4 3.500c3-1.500 7-1.500 10 0" stroke="#c8c8c8" stroke-width="1.600" fill="none"/><path d="M4.500 15h9" stroke="#b0b0b0" stroke-width="1"/></svg>
<div class="a t" style="left:26.5px;top:872.5px;">Transcript</div>
<div class="a " style="left:95px;top:875px;width:865px;height:1px;background:#fff"></div>
<div class="a " style="left:95px;top:876px;width:865px;height:1px;background:#fff"></div>
<div class="a " style="left:95px;top:877px;width:865px;height:1px;background:#777"></div>
<div class="a " style="left:960px;top:875px;width:1px;height:3px;background:#777"></div>
<div class="a " style="left:95px;top:881px;width:865px;height:1px;background:#fff"></div>
<div class="a " style="left:95px;top:882px;width:865px;height:1px;background:#fff"></div>
<div class="a " style="left:95px;top:883px;width:865px;height:1px;background:#777"></div>
<div class="a " style="left:960px;top:881px;width:1px;height:3px;background:#777"></div>
<div class="a " style="left:988px;top:875px;width:864px;height:1px;background:#fff"></div>
<div class="a " style="left:988px;top:876px;width:864px;height:1px;background:#fff"></div>
<div class="a " style="left:988px;top:877px;width:864px;height:1px;background:#777"></div>
<div class="a " style="left:1852px;top:875px;width:1px;height:3px;background:#777"></div>
<div class="a " style="left:988px;top:881px;width:864px;height:1px;background:#fff"></div>
<div class="a " style="left:988px;top:882px;width:864px;height:1px;background:#fff"></div>
<div class="a " style="left:988px;top:883px;width:864px;height:1px;background:#777"></div>
<div class="a " style="left:1852px;top:881px;width:1px;height:3px;background:#777"></div>
<div class="a" style="left:963px;top:876px;width:24px;height:1px;background:repeating-linear-gradient(90deg,#555 0 1px,transparent 1px 3px)"></div>
<div class="a" style="left:964px;top:879px;width:24px;height:1px;background:repeating-linear-gradient(90deg,#555 0 1px,transparent 1px 3px)"></div>
<div class="a" style="left:963px;top:882px;width:24px;height:1px;background:repeating-linear-gradient(90deg,#555 0 1px,transparent 1px 3px)"></div>
<div class="a sb" style="left:1856px;top:872px;width:16px;height:16px;background:#f0f0f0"></div>
<svg class="a" style="left:1858px;top:873px" width="12" height="12"><path d="M6 1v10M1 6h10" stroke="#000" stroke-width="2"/></svg>
<div class="a sb" style="left:1876px;top:872px;width:16px;height:16px;background:#f0f0f0"></div>
<svg class="a" style="left:1878px;top:873px" width="12" height="12"><path d="M1.5 5.5h5v5h-5z" fill="none" stroke="#000" stroke-width="1.2"/><path d="M4.5 7.5l5.5-5.5M6 1.5h4.5v4.5" fill="none" stroke="#000" stroke-width="1.6"/></svg>
<div class="a sb" style="left:1897px;top:872px;width:16px;height:16px;background:#f0f0f0"></div>
<svg class="a" style="left:1899px;top:873px" width="12" height="12"><path d="M1.5 1.5l9 9M10.5 1.5l-9 9" stroke="#000" stroke-width="1.7"/></svg>
<div class="a " style="left:1px;top:867px;width:1px;height:122px;background:#fff"></div>
<div class="a " style="left:0px;top:866px;width:1919px;height:1px;background:#fff"></div>
<div class="a " style="left:5px;top:890px;width:1888px;height:98px;background:#fff;border-top:2px solid #444;border-left:2px solid #444"></div>
<div class="a " style="left:0px;top:989px;width:1919px;height:1px;background:#a0a0a0"></div>
<div class="a trough" style="left:1896px;top:893px;width:19px;height:95px;"></div>
<div class="a sb" style="left:1896px;top:893px;width:19px;height:19px;"></div>
<svg class="a" style="left:0;top:0;pointer-events:none" width="1919" height="1022"><path d="M1901.5 904.5h8l-4-4z" fill="#000"/></svg>
<div class="a sb" style="left:1896px;top:969px;width:19px;height:19px;"></div>
<svg class="a" style="left:0;top:0;pointer-events:none" width="1919" height="1022"><path d="M1901.5 976.5h8l-4 4z" fill="#000"/></svg>
<div class="a sb" style="left:1896px;top:945px;width:19px;height:24px;"></div>
<div class="a t" style="left:10px;top:893px;color:#1c2490">VSIM 18&gt;</div>
<div class="a m" style="left:73px;top:893.5px;">run</div>
<div class="a m" style="left:9px;top:913px;">force -freeze sim:/alu/Opcode 110 0</div>
<div class="a t" style="left:10px;top:931px;color:#1c2490">VSIM 20&gt;</div>
<div class="a m" style="left:73px;top:931.5px;">run</div>
<div class="a t" style="left:9px;top:968px;color:#1c2490">VSIM 21&gt;</div>
<div class="a " style="left:0px;top:989px;width:1919px;height:33px;background:#f0f0f0"></div>
<div class="a " style="left:4px;top:994px;width:212px;height:23px;border-top:1px solid #a0a0a0;border-left:1px solid #a0a0a0;border-right:1px solid #fff;border-bottom:1px solid #fff"></div>
<div class="a t" style="left:12px;top:998px;">0 ps to 1 ns</div>
<div class="a " style="left:222px;top:994px;width:96px;height:23px;border-top:1px solid #a0a0a0;border-left:1px solid #a0a0a0;border-right:1px solid #fff;border-bottom:1px solid #fff"></div>
<div class="a t" style="left:225px;top:998px;">Project : FPGA</div>
<div class="a " style="left:322px;top:994px;width:248px;height:23px;border-top:1px solid #a0a0a0;border-left:1px solid #a0a0a0;border-right:1px solid #fff;border-bottom:1px solid #fff"></div>
<div class="a t" style="left:326px;top:998px;">Now: 800 ps&nbsp;&nbsp; Delta: 0</div>
<div class="a " style="left:573px;top:994px;width:1319px;height:23px;border-top:1px solid #a0a0a0;border-left:1px solid #a0a0a0;border-right:1px solid #fff;border-bottom:1px solid #fff"></div>
<div class="a t" style="left:578px;top:998px;">sim:/alu</div>
<div class="a " style="left:0px;top:1020px;width:1919px;height:2px;background:#1a1a1a"></div>
<svg class="a" style="left:1900px;top:1002px" width="17" height="17"><path d="M16 3L3 16M16 8L8 16M16 13l-3 3" stroke="#a0a0a0" stroke-width="1.5"/></svg>
<div class="a t" style="left:826px;top:882px;font-family:'DejaVu Sans',sans-serif;font-weight:bold;font-size:73px;line-height:90px;color:#000;opacity:0.095;width:260px;text-align:center;transform:scaleX(0.9);transform-origin:50% 50%">مستقل</div>
<div class="a t" style="left:843px;top:958px;font-weight:bold;font-size:38.5px;line-height:44px;color:#000;opacity:0.09;letter-spacing:-0.7px">mostaql.com</div>
</body></html>
